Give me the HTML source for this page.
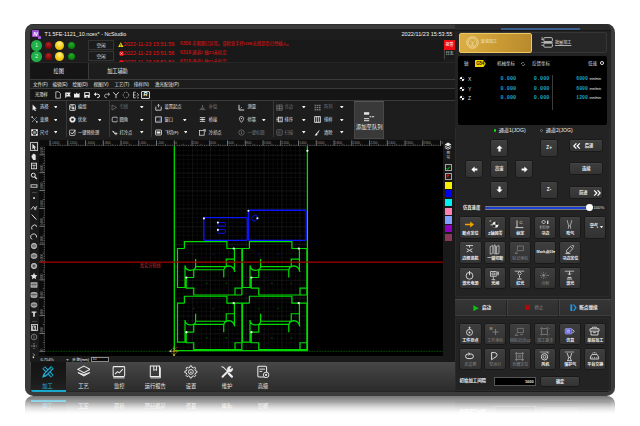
<!DOCTYPE html>
<html lang="zh-CN"><head><meta charset="utf-8"><title>NcStudio</title>
<style>
*{margin:0;padding:0;box-sizing:border-box}
html,body{width:640px;height:426px;background:#fff;overflow:hidden}
body{position:relative;font-family:"Liberation Sans","Noto Sans CJK SC",sans-serif;color:#eee;font-size:5.5px;line-height:1}
.a{position:absolute}
.t{position:absolute;white-space:nowrap;line-height:1}
#win{position:absolute;left:25px;top:23.8px;width:590.4px;height:372px;border-radius:8.5px;background:#3b3b3b;box-shadow:inset 0 .6px 0 #262626}
#inner{position:absolute;left:29.700px;top:28.700px;width:581.100px;height:363px;border-radius:4.500px;background:#1d1d1d}
</style></head><body>
<div class="a" style="left:0;top:395.900px;width:640px;height:24px;overflow:hidden">
<div class="a" style="left:0;top:0;width:640px;height:40px;transform:scaleY(-1)">
<div class="a" style="left:25px;top:-20px;width:590.200px;height:60px;border-radius:8px;background:#3b3b3b"></div>
<div class="a" style="left:30px;top:6.4px;width:425px;height:28.800px;background:linear-gradient(#474747,#3a3a3a 45%,#2c2c2c)"></div>
<div class="a" style="left:455px;top:0;width:155.600px;height:35.4px;background:#232323;border-radius:0 0 3px 0"></div>
<div class="a" style="left:30.600px;top:6.4px;width:35.400px;height:29.400px;background:linear-gradient(#141414,#1a1a1a 60%,#242424)"></div>
<div class="a" style="left:31px;top:34.2px;width:34.800px;height:1.700px;background:#18a8cc"></div>
<div class="t" style="left:27.60px;width:40px;text-align:center;top:27.7px;font-size:5.250px;color:#1cb4dc">加工</div>
<div class="t" style="left:63.40px;width:40px;text-align:center;top:27.7px;font-size:5.250px;color:#ececec">工艺</div>
<div class="t" style="left:99.30px;width:40px;text-align:center;top:27.7px;font-size:5.250px;color:#ececec">监控</div>
<div class="t" style="left:135.20px;width:40px;text-align:center;top:27.7px;font-size:5.250px;color:#ececec">运行报告</div>
<div class="t" style="left:171.10px;width:40px;text-align:center;top:27.7px;font-size:5.250px;color:#ececec">设置</div>
<div class="t" style="left:207.00px;width:40px;text-align:center;top:27.7px;font-size:5.250px;color:#ececec">维护</div>
<div class="t" style="left:242.90px;width:40px;text-align:center;top:27.7px;font-size:5.250px;color:#ececec">高级</div>
<div class="t" style="left:459.600px;top:23.4px;font-size:4.400px;font-weight:bold;color:#eee">初始加工间隔</div>
<div class="a" style="left:494.400px;top:21.4px;width:41.600px;height:8.800px;background:#000;border:.6px solid #555"></div>
<div class="a" style="left:541.400px;top:21.2px;width:37.400px;height:9px;background:#3a3a3a;border:.7px solid #161616"></div>
</div>
<div class="a" style="left:0;top:0;width:640px;height:24px;background:linear-gradient(rgba(255,255,255,.30),rgba(255,255,255,.46) 4px,rgba(255,255,255,.68) 8px,rgba(255,255,255,.86) 12px,rgba(255,255,255,.97) 16px,#fff 18px)"></div>
</div>
<div id="win"></div><div id="inner"></div>
<style>
.led{position:absolute;border-radius:50%}
.btn0{position:absolute;background:#1b1b1b;border:0.6px solid #343434;text-align:center;color:#ddd;font-size:4.6px}
.mn{position:absolute;top:82.700px;font-size:4.5px;color:#e8e8e8;white-space:nowrap}
.rb{position:absolute;font-size:4.25px;color:#e6e6e6;white-space:nowrap}
.rb.dim{color:#777}
.arr{position:absolute;width:0;height:0;border-left:1.750px solid transparent;border-right:1.750px solid transparent;border-top:2.500px solid #f2f2f2}
.vs{position:absolute;width:0.7px;background:#383838;top:101px;height:36px}
.ic{position:absolute;width:7px;height:7px}
</style>
<!-- title bar -->
<div class="a" style="left:31.7px;top:29.8px;width:7.6px;height:7.6px;background:#9b4fd0;border-radius:1px"></div>
<div class="a" style="left:37.5px;top:35.6px;width:3.4px;height:3.4px;background:#a457d6;border-radius:.6px"></div>
<div class="t" style="left:33.2px;top:30.6px;font-size:6px;font-weight:bold;font-style:italic;color:#fff">N</div>
<div class="t" style="left:44.6px;top:31.6px;font-size:5.4px;color:#f2f2f2">T1.5FE-1121_10.ncex* - NcStudio</div>
<div class="t" style="left:401.5px;top:31.6px;font-size:5.6px;color:#f2f2f2">2022/11/23 15:53:55</div>
<!-- leds -->
<div class="led" style="left:31.2px;top:40.2px;width:10.6px;height:10.6px;background:#1fb04a"></div>
<div class="led" style="left:31.2px;top:51.1px;width:10.6px;height:10.6px;background:#1fb04a"></div>
<div class="t" style="left:35px;top:42.6px;font-size:5.6px;color:#d8f5dc">1</div>
<div class="t" style="left:35px;top:53.5px;font-size:5.6px;color:#d8f5dc">2</div>
<div class="led" style="left:44.6px;top:42px;width:7px;height:7px;background:radial-gradient(circle at 50% 30%,#b42424,#8c0a0a 55%,#6a0404)"></div>
<div class="led" style="left:44.6px;top:52.9px;width:7px;height:7px;background:radial-gradient(circle at 50% 30%,#b42424,#8c0a0a 55%,#6a0404)"></div>
<div class="led" style="left:55.1px;top:41px;width:9px;height:9px;background:radial-gradient(circle at 50% 30%,#fff0a0,#f6d21c 45%,#e0a800)"></div>
<div class="led" style="left:55.1px;top:51.9px;width:9px;height:9px;background:radial-gradient(circle at 50% 30%,#fff0a0,#f6d21c 45%,#e0a800)"></div>
<div class="led" style="left:67.6px;top:42px;width:7px;height:7px;background:radial-gradient(circle at 50% 30%,#2aa82a,#0c8a14 55%,#066408)"></div>
<div class="led" style="left:67.6px;top:52.9px;width:7px;height:7px;background:radial-gradient(circle at 50% 30%,#2aa82a,#0c8a14 55%,#066408)"></div>
<div class="btn0" style="left:88.2px;top:40.400px;width:25.600px;height:9.800px;line-height:9.200px">空闲</div>
<div class="btn0" style="left:88.2px;top:51.400px;width:25.600px;height:9.800px;line-height:9.800px">空闲</div>
<!-- log -->
<div class="a" style="left:115px;top:40px;width:328px;height:21.9px;background:#191919;overflow:hidden">
 <svg class="a" style="left:3.2px;top:1.600px" width="5.600" height="5.400" viewBox="0 0 10 9"><path d="M5 0L10 9H0Z" fill="#f5e000"/><rect x="4.4" y="3" width="1.2" height="3.4" fill="#222"/><rect x="4.4" y="7" width="1.2" height="1.1" fill="#222"/></svg>
 <div class="led" style="left:3.6px;top:11px;width:5px;height:5px;background:#ee1010"></div><svg class="a" style="left:3.6px;top:11px" width="5" height="5" viewBox="0 0 5 5"><path d="M1.5 1.5l2 2M3.500 1.500l-2 2" stroke="#fff" stroke-width=".7"/></svg>
 <div class="led" style="left:3.6px;top:20.200px;width:5px;height:5px;background:#ee1010"></div>
 <div class="t" style="left:8.6px;top:1.75px;font-size:5.5px;color:#ee1111">2022-11-23 15:51:59</div>
 <div class="t" style="left:8.6px;top:10.75px;font-size:5.5px;color:#ee1111">2022-11-23 15:51:56</div>
 <div class="t" style="left:8.6px;top:19.9px;font-size:5.5px;color:#ee1111">2022-11-23 15:51:54</div>
 <div class="t" style="left:65px;top:2.2px;font-size:4.3px;color:#ee1111"><span style="font-size:4.900px">6306</span> 非限期已异常。请检查手持USB无线是否已经插入。</div>
 <div class="t" style="left:65px;top:11.2px;font-size:4.3px;color:#ee1111"><span style="font-size:4.900px">6319</span> 通道2 轴Z2未标定</div>
 <div class="t" style="left:65px;top:20.4px;font-size:4.3px;color:#ee1111"><span style="font-size:4.900px">6319</span> 通道1 轴Z1未标定</div>
</div>
<div class="a" style="left:443.6px;top:40px;width:11px;height:9.6px;background:#ee0d14"></div>
<div class="t" style="left:445.4px;top:42.8px;font-size:4px;color:#fff">报警</div>
<div class="a" style="left:443.6px;top:50px;width:11px;height:9px;background:#1a1a1a;border-left:.6px solid #444"></div>
<div class="t" style="left:445.4px;top:52.4px;font-size:4px;color:#ddd">日志</div>
<!-- tabs -->
<div class="a" style="left:30px;top:62.4px;width:425px;height:.6px;background:#262626"></div>
<div class="a" style="left:30px;top:63.2px;width:58px;height:15.6px;background:#151515"></div>
<div class="a" style="left:88px;top:63.2px;width:.7px;height:15.6px;background:#3a3a3a"></div>
<div class="t" style="left:53.600px;top:68.800px;font-size:5.150px;color:#f0f0f0">绘图</div>
<div class="t" style="left:107.200px;top:68.800px;font-size:5.150px;color:#f0f0f0">加工辅助</div>
<div class="a" style="left:30px;top:79px;width:425px;height:1px;background:#3a3a3a"></div>
<!-- menu -->
<div class="mn" style="left:33px">文件(F)</div><div class="mn" style="left:52.6px">编辑(E)</div><div class="mn" style="left:72.6px">绘图(D)</div><div class="mn" style="left:93.6px">视图(V)</div><div class="mn" style="left:114.4px">工艺(T)</div><div class="mn" style="left:133.8px">排样(N)</div><div class="mn" style="left:155px">激光配效(P)</div>
<div class="a" style="left:30px;top:88px;width:425px;height:.8px;background:#3a3a3a"></div>
<!-- toolbar -->
<div class="a" style="left:30px;top:88.800px;width:425px;height:11.600px;background:#151515"></div>
<div class="t" style="left:35px;top:92.8px;font-size:4.3px;color:#eee">光滑样</div>
<svg class="a" style="left:54.3px;top:91.0px" width="8" height="8" viewBox="0 0 8 8"><path d="M1.8 .8h3l1.6 1.6v4.8H1.8z" fill="none" stroke="#eee" stroke-width=".7"/></svg><svg class="a" style="left:63.6px;top:91.0px" width="8" height="8" viewBox="0 0 8 8"><path d="M1.2 1.5h5.6l-1.2 2 1.2 2H2.2v1.3H1.2z" fill="#eee"/><path d="M2.6 2.4l1.6 1.1-1.6 1.1z" fill="#222"/></svg><svg class="a" style="left:73.4px;top:91.0px" width="8" height="8" viewBox="0 0 8 8"><path d="M1 2.2l1.4 1 1.4-1.6 1.2 1.6 1.6-1.4v4.6H1z" fill="#eee"/></svg><svg class="a" style="left:83.2px;top:91.0px" width="8" height="8" viewBox="0 0 8 8"><path d="M1.2 1.2h5.6v5.6H1.2z" fill="#eee"/><rect x="2.2" y="2" width="3.6" height="2" fill="#222"/><rect x="3.4" y="5.2" width="1.4" height="1.6" fill="#222"/></svg><svg class="a" style="left:93.4px;top:91.0px" width="8" height="8" viewBox="0 0 8 8"><path d="M2 3.2h2.8a1.7 1.7 0 0 1 0 3.4H4" fill="none" stroke="#eee" stroke-width="1"/><path d="M3 1.2L.8 3.2 3 5.2z" fill="#eee"/></svg><svg class="a" style="left:102.6px;top:91.0px" width="8" height="8" viewBox="0 0 8 8"><path d="M6 3.2H3.2a1.7 1.7 0 0 0 0 3.4H4" fill="none" stroke="#999" stroke-width="1"/><path d="M5 1.2l2.2 2L5 5.2z" fill="#999"/></svg><svg class="a" style="left:112.4px;top:91.0px" width="8" height="8" viewBox="0 0 8 8"><path d="M1.2 1.2L4 4.2 6.8 1.2M4 4.2v3" fill="none" stroke="#ddd" stroke-width=".9"/></svg><svg class="a" style="left:122.0px;top:91.0px" width="8" height="8" viewBox="0 0 8 8"><circle cx="4" cy="4" r="2.8" fill="none" stroke="#aaa" stroke-width=".8" stroke-dasharray="1.6 1"/></svg><svg class="a" style="left:131.6px;top:91.0px" width="8" height="8" viewBox="0 0 8 8"><path d="M1.5 1.2v5.6M1.5 1.2h2.2M1.5 4h2M1.5 6.8h2.2M5 2l1.6 1.8L5 5.6M5.2 6.8h1.6" fill="none" stroke="#ddd" stroke-width=".8"/></svg><div class="a" style="left:141.4px;top:90.6px;width:8.4px;height:8.8px;border:.7px solid #cfcfcf;border-radius:1px;background:#222"></div><div class="t" style="left:143.6px;top:92.2px;font-size:5.4px;font-weight:bold;font-style:italic;color:#fff">R</div>
<div class="a" style="left:30px;top:100.4px;width:425px;height:.8px;background:#3a3a3a"></div>
<!-- ribbon -->
<svg class="a" style="left:30.7px;top:103.5px" width="7" height="7" viewBox="0 0 7 7"><path d="M1.6 .6l4.2 4.2H4l1 2-1 .5-1-2L1.6 6.6z" fill="#eaeaea"/></svg><div class="rb" style="left:40px;top:105.20px">选择</div><svg class="a" style="left:53.90px;top:105.70px" width="3.6" height="2.6" viewBox="0 0 3.6 2.6"><path d="M0 0h3.600L1.800 2.600z" fill="#f4f4f4"/></svg><svg class="a" style="left:30.7px;top:116.3px" width="7" height="7" viewBox="0 0 7 7"><path d="M1 1l5 5M1 6L6 1" stroke="#eaeaea" stroke-width=".7" stroke-dasharray="1.2 .6"/><rect x=".4" y=".4" width="1.4" height="1.4" fill="#eaeaea"/><rect x="5.2" y="5.2" width="1.4" height="1.4" fill="#eaeaea"/></svg><div class="rb" style="left:40px;top:118.00px">变换</div><svg class="a" style="left:53.90px;top:118.50px" width="3.6" height="2.6" viewBox="0 0 3.6 2.6"><path d="M0 0h3.600L1.800 2.600z" fill="#f4f4f4"/></svg><svg class="a" style="left:30.7px;top:129.1px" width="7" height="7" viewBox="0 0 7 7"><rect x=".8" y=".8" width="5.4" height="5.4" fill="none" stroke="#eaeaea" stroke-width=".8"/><path d="M2.2 2.2h2.6v2.6H2.2z" fill="#eaeaea" opacity=".6"/><path d="M.4.4h1.6v1.6H.4zM5 .4h1.6v1.6H5zM.4 5h1.6v1.6H.4zM5 5h1.6v1.6H5z" fill="#eaeaea"/></svg><div class="rb" style="left:40px;top:130.80px">尺寸</div><svg class="a" style="left:53.90px;top:131.30px" width="3.6" height="2.6" viewBox="0 0 3.6 2.6"><path d="M0 0h3.600L1.800 2.600z" fill="#f4f4f4"/></svg><svg class="a" style="left:68.9px;top:103.5px" width="7" height="7" viewBox="0 0 7 7"><rect x=".6" y=".6" width="5.8" height="5.8" rx=".8" fill="none" stroke="#eaeaea" stroke-width=".8"/><rect x="1.8" y="1.8" width="2.2" height="2.2" fill="none" stroke="#eaeaea" stroke-width=".7"/><rect x="3.4" y="3.4" width="2" height="2" fill="#eaeaea"/></svg><div class="rb" style="left:78px;top:105.20px">编组</div><svg class="a" style="left:68.9px;top:116.3px" width="7" height="7" viewBox="0 0 7 7"><circle cx="3.5" cy="3.5" r="2.1" fill="none" stroke="#eaeaea" stroke-width="1.5"/><circle cx="3.5" cy="3.5" r="2.9" fill="none" stroke="#eaeaea" stroke-width=".9" stroke-dasharray="1 1.28"/></svg><div class="rb" style="left:78px;top:118.00px">优化</div><svg class="a" style="left:97.60px;top:118.50px" width="3.6" height="2.6" viewBox="0 0 3.6 2.6"><path d="M0 0h3.600L1.800 2.600z" fill="#f4f4f4"/></svg><svg class="a" style="left:68.9px;top:129.1px" width="7" height="7" viewBox="0 0 7 7"><rect x=".6" y="1" width="5.4" height="5.4" rx=".6" fill="none" stroke="#eaeaea" stroke-width=".7"/><path d="M1.8 3.4l1.4 1.6L6.6.8" fill="none" stroke="#eaeaea" stroke-width=".9"/></svg><div class="rb" style="left:78px;top:130.80px">一键预处理</div><svg class="a" style="left:110.5px;top:103.5px" width="7" height="7" viewBox="0 0 7 7"><path d="M1 1l4.6 2.5L1 6z" fill="none" stroke="#777" stroke-width=".7"/></svg><div class="rb dim" style="left:119.6px;top:105.20px">引线</div><svg class="a" style="left:140.20px;top:105.70px" width="3.6" height="2.6" viewBox="0 0 3.6 2.6"><path d="M0 0h3.600L1.800 2.600z" fill="#f4f4f4"/></svg><svg class="a" style="left:110.5px;top:116.3px" width="7" height="7" viewBox="0 0 7 7"><path d="M6 1.2H2.2a1 1 0 0 0-1 1v2.6a1 1 0 0 0 1 1H6" fill="none" stroke="#eaeaea" stroke-width=".7"/><path d="M6.2 1v5" stroke="#eaeaea" stroke-width=".6" stroke-dasharray=".8 .6"/></svg><div class="rb" style="left:119.6px;top:118.00px">圆角</div><svg class="a" style="left:140.20px;top:118.50px" width="3.6" height="2.6" viewBox="0 0 3.6 2.6"><path d="M0 0h3.600L1.800 2.600z" fill="#f4f4f4"/></svg><svg class="a" style="left:110.5px;top:129.1px" width="7" height="7" viewBox="0 0 7 7"><path d="M.6 1.4l2.6 1.2 1 2.6-1.4-1.2z" fill="#eaeaea"/><path d="M3.4 4.6h3M5 3.2v3" stroke="#eaeaea" stroke-width=".8"/></svg><div class="rb" style="left:119.6px;top:130.80px">打冷点</div><svg class="a" style="left:140.20px;top:131.30px" width="3.6" height="2.6" viewBox="0 0 3.6 2.6"><path d="M0 0h3.600L1.800 2.600z" fill="#f4f4f4"/></svg><svg class="a" style="left:154.9px;top:103.5px" width="7" height="7" viewBox="0 0 7 7"><path d="M.8 2.6v3.6h5.4V2.6" fill="none" stroke="#eaeaea" stroke-width=".8"/><path d="M3.5.4v3M2.3 1.6L3.5.4l1.2 1.2" fill="none" stroke="#eaeaea" stroke-width=".7"/></svg><div class="rb" style="left:164.6px;top:105.20px">设置起点</div><svg class="a" style="left:154.9px;top:116.3px" width="7" height="7" viewBox="0 0 7 7"><rect x=".7" y=".9" width="5.6" height="5.2" fill="none" stroke="#eaeaea" stroke-width=".8"/><path d="M5.2 2v3.2H2" fill="none" stroke="#6a7fb5" stroke-width=".7"/></svg><div class="rb" style="left:164.6px;top:118.00px">窗口</div><svg class="a" style="left:183.20px;top:118.50px" width="3.6" height="2.6" viewBox="0 0 3.6 2.6"><path d="M0 0h3.600L1.800 2.600z" fill="#f4f4f4"/></svg><svg class="a" style="left:154.9px;top:129.1px" width="7" height="7" viewBox="0 0 7 7"><rect x=".5" y="1" width="6" height="5" rx=".6" fill="none" stroke="#eaeaea" stroke-width=".8"/><rect x="1.6" y="2.4" width="3.8" height="2.2" fill="#eaeaea"/></svg><div class="rb" style="left:164.6px;top:130.80px">飞切(F)</div><svg class="a" style="left:183.60px;top:131.30px" width="3.6" height="2.6" viewBox="0 0 3.6 2.6"><path d="M0 0h3.600L1.800 2.600z" fill="#f4f4f4"/></svg><svg class="a" style="left:199.1px;top:103.5px" width="7" height="7" viewBox="0 0 7 7"><path d="M.6 5.6h5.8M1.6 4.4h3.8M2.6 3.2h1.8M3.5 1v2" stroke="#777" stroke-width=".7" fill="none"/></svg><div class="rb dim" style="left:208.8px;top:105.20px">补偿</div><svg class="a" style="left:199.1px;top:116.3px" width="7" height="7" viewBox="0 0 7 7"><path d="M.8 1.6h5.4M.8 3.5h5.4M.8 5.4h5.4" stroke="#eaeaea" stroke-width=".8"/><rect x="2.6" y="2.6" width="1.8" height="1.8" fill="#eaeaea"/></svg><div class="rb" style="left:208.8px;top:118.00px">桥接</div><svg class="a" style="left:199.1px;top:129.1px" width="7" height="7" viewBox="0 0 7 7"><rect x=".6" y="1.6" width="4.6" height="4.6" fill="none" stroke="#eaeaea" stroke-width=".7"/><path d="M4.4.6h2v2" fill="none" stroke="#eaeaea" stroke-width=".7"/></svg><div class="rb" style="left:208.8px;top:130.80px">冷却点</div><svg class="a" style="left:237.9px;top:103.5px" width="7" height="7" viewBox="0 0 7 7"><path d="M1 .8v5.2h5.2" fill="none" stroke="#eaeaea" stroke-width=".9"/><path d="M2.4 4.6L4 3" stroke="#eaeaea" stroke-width=".5"/></svg><div class="rb" style="left:247.6px;top:105.20px">测量</div><svg class="a" style="left:237.9px;top:116.3px" width="7" height="7" viewBox="0 0 7 7"><path d="M3.5 6.4C1.8 4.4 1.4 3.4 1.4 2.6a2.1 2.1 0 0 1 4.2 0c0 .8-.4 1.8-2.1 3.8z" fill="none" stroke="#eaeaea" stroke-width=".7"/><circle cx="3.5" cy="2.6" r=".7" fill="#eaeaea"/></svg><div class="rb" style="left:247.6px;top:118.00px">停靠</div><svg class="a" style="left:262.00px;top:118.50px" width="3.6" height="2.6" viewBox="0 0 3.6 2.6"><path d="M0 0h3.600L1.800 2.600z" fill="#f4f4f4"/></svg><svg class="a" style="left:237.9px;top:129.1px" width="7" height="7" viewBox="0 0 7 7"><circle cx="3.5" cy="3.5" r="2.7" fill="none" stroke="#777" stroke-width=".7"/><path d="M3.5 2v3" stroke="#777" stroke-width=".7"/></svg><div class="rb dim" style="left:247.6px;top:130.80px">一键标圆</div><svg class="a" style="left:275.7px;top:103.5px" width="7" height="7" viewBox="0 0 7 7"><path d="M.6 1h5.8M.6 2.8h5.8M.6 4.6h5.8M.6 6.2h5.8M.8 1v5.2M3.5 1v5.2M6.2 1v5.2" stroke="#777" stroke-width=".7"/></svg><div class="rb dim" style="left:284.6px;top:105.20px">共边</div><svg class="a" style="left:302.00px;top:105.70px" width="3.6" height="2.6" viewBox="0 0 3.6 2.6"><path d="M0 0h3.600L1.800 2.600z" fill="#f4f4f4"/></svg><svg class="a" style="left:275.7px;top:116.3px" width="7" height="7" viewBox="0 0 7 7"><rect x="2.4" y="1.2" width="3.8" height="4.6" fill="none" stroke="#eaeaea" stroke-width=".8"/><path d="M.4 2h1.6M.4 3.5h1.6M.4 5h1.6" stroke="#eaeaea" stroke-width=".7"/><path d="M3.4 2.6h1.8M3.4 4.2h1.8" stroke="#eaeaea" stroke-width=".6"/></svg><div class="rb" style="left:284.6px;top:118.00px">排序</div><svg class="a" style="left:302.00px;top:118.50px" width="3.6" height="2.6" viewBox="0 0 3.6 2.6"><path d="M0 0h3.600L1.800 2.600z" fill="#f4f4f4"/></svg><svg class="a" style="left:275.7px;top:129.1px" width="7" height="7" viewBox="0 0 7 7"><rect x=".8" y=".8" width="5.4" height="5.4" rx=".6" fill="none" stroke="#777" stroke-width=".7"/><path d="M2 2.2h3M2 3.5h3M2 4.8h3" stroke="#777" stroke-width=".6" stroke-dasharray=".8 .5"/></svg><div class="rb dim" style="left:284.6px;top:130.80px">扫描</div><svg class="a" style="left:302.00px;top:131.30px" width="3.6" height="2.6" viewBox="0 0 3.6 2.6"><path d="M0 0h3.600L1.800 2.600z" fill="#f4f4f4"/></svg><svg class="a" style="left:314.3px;top:103.5px" width="7" height="7" viewBox="0 0 7 7"><path d="M.6.8h1.6v1.4H.6zM2.8.8h1.6v1.4H2.8zM5 .8h1.6v1.4H5zM.6 2.9h1.6v1.4H.6zM2.8 2.9h1.6v1.4H2.8zM5 2.9h1.6v1.4H5zM.6 5h1.6v1.4H.6zM2.8 5h1.6v1.4H2.8zM5 5h1.6v1.4H5z" fill="#777"/></svg><div class="rb dim" style="left:324px;top:105.20px">阵列</div><svg class="a" style="left:340.00px;top:105.70px" width="3.6" height="2.6" viewBox="0 0 3.6 2.6"><path d="M0 0h3.600L1.800 2.600z" fill="#f4f4f4"/></svg><svg class="a" style="left:314.3px;top:116.3px" width="7" height="7" viewBox="0 0 7 7"><rect x=".7" y=".7" width="5.6" height="5.6" fill="none" stroke="#eaeaea" stroke-width=".9"/><path d="M2.6.8v5.4M4.4.8v5.4" stroke="#eaeaea" stroke-width=".7"/></svg><div class="rb" style="left:324px;top:118.00px">排样</div><svg class="a" style="left:340.00px;top:118.50px" width="3.6" height="2.6" viewBox="0 0 3.6 2.6"><path d="M0 0h3.600L1.800 2.600z" fill="#f4f4f4"/></svg><svg class="a" style="left:314.3px;top:129.1px" width="7" height="7" viewBox="0 0 7 7"><path d="M5.8.6L3 3.6l1 1zM2.6 3.8l1.2 1.2-1 1.6H.6z" fill="#eaeaea"/></svg><div class="rb" style="left:324px;top:130.80px">清除</div><svg class="a" style="left:340.00px;top:131.30px" width="3.6" height="2.6" viewBox="0 0 3.6 2.6"><path d="M0 0h3.600L1.800 2.600z" fill="#f4f4f4"/></svg><div class="vs" style="left:66.2px"></div><div class="vs" style="left:108.8px"></div><div class="vs" style="left:151.2px"></div><div class="vs" style="left:273px"></div>
<div class="a" style="left:354.100px;top:101.200px;width:30.200px;height:37.400px;background:#393939;border:.6px solid #474747;border-top-color:#555"></div>
<div class="t" style="left:356px;top:124.900px;font-size:5.300px;color:#f0f0f0">添加至队列</div>
<svg class="a" style="left:364.200px;top:111.600px" width="11" height="10" viewBox="0 0 11 10"><rect x="0" y=".2" width="5.200" height="2.500" fill="#e4e4e4"/><path d="M0 6.700h5.200M0 8.700h5.200" stroke="#e4e4e4" stroke-width="1"/><path d="M5.600 4.700h1.400M7.600 4.700h2.600" stroke="#e4e4e4" stroke-width="1.100"/></svg>

<div class="a" style="left:30px;top:138.6px;width:425px;height:224px;background:#1b1b1b"></div>
<div class="a" style="left:45px;top:146px;width:398.4px;height:210.4px;background:#000"></div>
<div class="a" style="left:39px;top:140px;width:404.4px;height:6.2px;background:#0c0c0c"></div>
<div class="a" style="left:39px;top:140px;width:6.2px;height:216.4px;background:#0c0c0c"></div>
<svg class="a" style="left:30px;top:138px" width="426" height="226" viewBox="30 138 426 226"><path d="M50.05 140.4V146" stroke="#bdbdbd" stroke-width=".6"/><text x="50.85" y="144.2" font-size="3.300" fill="#8e8e8e" font-family="Liberation Sans,sans-serif">-1400</text><path d="M51.83 144.8V146" stroke="#aaa" stroke-width=".45"/><path d="M53.60 144.8V146" stroke="#aaa" stroke-width=".45"/><path d="M55.38 144.8V146" stroke="#aaa" stroke-width=".45"/><path d="M57.15 144.8V146" stroke="#aaa" stroke-width=".45"/><path d="M58.93 143.8V146" stroke="#aaa" stroke-width=".45"/><path d="M60.70 144.8V146" stroke="#aaa" stroke-width=".45"/><path d="M62.48 144.8V146" stroke="#aaa" stroke-width=".45"/><path d="M64.25 144.8V146" stroke="#aaa" stroke-width=".45"/><path d="M66.03 144.8V146" stroke="#aaa" stroke-width=".45"/><path d="M67.80 140.4V146" stroke="#bdbdbd" stroke-width=".6"/><text x="68.60" y="144.2" font-size="3.300" fill="#8e8e8e" font-family="Liberation Sans,sans-serif">-1200</text><path d="M69.58 144.8V146" stroke="#aaa" stroke-width=".45"/><path d="M71.35 144.8V146" stroke="#aaa" stroke-width=".45"/><path d="M73.13 144.8V146" stroke="#aaa" stroke-width=".45"/><path d="M74.90 144.8V146" stroke="#aaa" stroke-width=".45"/><path d="M76.68 143.8V146" stroke="#aaa" stroke-width=".45"/><path d="M78.45 144.8V146" stroke="#aaa" stroke-width=".45"/><path d="M80.23 144.8V146" stroke="#aaa" stroke-width=".45"/><path d="M82.00 144.8V146" stroke="#aaa" stroke-width=".45"/><path d="M83.78 144.8V146" stroke="#aaa" stroke-width=".45"/><path d="M85.55 140.4V146" stroke="#bdbdbd" stroke-width=".6"/><text x="86.35" y="144.2" font-size="3.300" fill="#8e8e8e" font-family="Liberation Sans,sans-serif">-1000</text><path d="M87.33 144.8V146" stroke="#aaa" stroke-width=".45"/><path d="M89.10 144.8V146" stroke="#aaa" stroke-width=".45"/><path d="M90.88 144.8V146" stroke="#aaa" stroke-width=".45"/><path d="M92.65 144.8V146" stroke="#aaa" stroke-width=".45"/><path d="M94.43 143.8V146" stroke="#aaa" stroke-width=".45"/><path d="M96.20 144.8V146" stroke="#aaa" stroke-width=".45"/><path d="M97.98 144.8V146" stroke="#aaa" stroke-width=".45"/><path d="M99.75 144.8V146" stroke="#aaa" stroke-width=".45"/><path d="M101.53 144.8V146" stroke="#aaa" stroke-width=".45"/><path d="M103.30 140.4V146" stroke="#bdbdbd" stroke-width=".6"/><text x="104.10" y="144.2" font-size="3.300" fill="#8e8e8e" font-family="Liberation Sans,sans-serif">-800</text><path d="M105.08 144.8V146" stroke="#aaa" stroke-width=".45"/><path d="M106.85 144.8V146" stroke="#aaa" stroke-width=".45"/><path d="M108.63 144.8V146" stroke="#aaa" stroke-width=".45"/><path d="M110.40 144.8V146" stroke="#aaa" stroke-width=".45"/><path d="M112.18 143.8V146" stroke="#aaa" stroke-width=".45"/><path d="M113.95 144.8V146" stroke="#aaa" stroke-width=".45"/><path d="M115.73 144.8V146" stroke="#aaa" stroke-width=".45"/><path d="M117.50 144.8V146" stroke="#aaa" stroke-width=".45"/><path d="M119.28 144.8V146" stroke="#aaa" stroke-width=".45"/><path d="M121.05 140.4V146" stroke="#bdbdbd" stroke-width=".6"/><text x="121.85" y="144.2" font-size="3.300" fill="#8e8e8e" font-family="Liberation Sans,sans-serif">-600</text><path d="M122.83 144.8V146" stroke="#aaa" stroke-width=".45"/><path d="M124.60 144.8V146" stroke="#aaa" stroke-width=".45"/><path d="M126.38 144.8V146" stroke="#aaa" stroke-width=".45"/><path d="M128.15 144.8V146" stroke="#aaa" stroke-width=".45"/><path d="M129.93 143.8V146" stroke="#aaa" stroke-width=".45"/><path d="M131.70 144.8V146" stroke="#aaa" stroke-width=".45"/><path d="M133.48 144.8V146" stroke="#aaa" stroke-width=".45"/><path d="M135.25 144.8V146" stroke="#aaa" stroke-width=".45"/><path d="M137.03 144.8V146" stroke="#aaa" stroke-width=".45"/><path d="M138.80 140.4V146" stroke="#bdbdbd" stroke-width=".6"/><text x="139.60" y="144.2" font-size="3.300" fill="#8e8e8e" font-family="Liberation Sans,sans-serif">-400</text><path d="M140.58 144.8V146" stroke="#aaa" stroke-width=".45"/><path d="M142.35 144.8V146" stroke="#aaa" stroke-width=".45"/><path d="M144.12 144.8V146" stroke="#aaa" stroke-width=".45"/><path d="M145.90 144.8V146" stroke="#aaa" stroke-width=".45"/><path d="M147.68 143.8V146" stroke="#aaa" stroke-width=".45"/><path d="M149.45 144.8V146" stroke="#aaa" stroke-width=".45"/><path d="M151.23 144.8V146" stroke="#aaa" stroke-width=".45"/><path d="M153.00 144.8V146" stroke="#aaa" stroke-width=".45"/><path d="M154.78 144.8V146" stroke="#aaa" stroke-width=".45"/><path d="M156.55 140.4V146" stroke="#bdbdbd" stroke-width=".6"/><text x="157.35" y="144.2" font-size="3.300" fill="#8e8e8e" font-family="Liberation Sans,sans-serif">-200</text><path d="M158.33 144.8V146" stroke="#aaa" stroke-width=".45"/><path d="M160.10 144.8V146" stroke="#aaa" stroke-width=".45"/><path d="M161.88 144.8V146" stroke="#aaa" stroke-width=".45"/><path d="M163.65 144.8V146" stroke="#aaa" stroke-width=".45"/><path d="M165.43 143.8V146" stroke="#aaa" stroke-width=".45"/><path d="M167.20 144.8V146" stroke="#aaa" stroke-width=".45"/><path d="M168.98 144.8V146" stroke="#aaa" stroke-width=".45"/><path d="M170.75 144.8V146" stroke="#aaa" stroke-width=".45"/><path d="M172.53 144.8V146" stroke="#aaa" stroke-width=".45"/><path d="M174.30 140.4V146" stroke="#bdbdbd" stroke-width=".6"/><text x="175.10" y="144.2" font-size="3.300" fill="#8e8e8e" font-family="Liberation Sans,sans-serif">0</text><path d="M176.08 144.8V146" stroke="#aaa" stroke-width=".45"/><path d="M177.85 144.8V146" stroke="#aaa" stroke-width=".45"/><path d="M179.62 144.8V146" stroke="#aaa" stroke-width=".45"/><path d="M181.40 144.8V146" stroke="#aaa" stroke-width=".45"/><path d="M183.18 143.8V146" stroke="#aaa" stroke-width=".45"/><path d="M184.95 144.8V146" stroke="#aaa" stroke-width=".45"/><path d="M186.73 144.8V146" stroke="#aaa" stroke-width=".45"/><path d="M188.50 144.8V146" stroke="#aaa" stroke-width=".45"/><path d="M190.28 144.8V146" stroke="#aaa" stroke-width=".45"/><path d="M192.05 140.4V146" stroke="#bdbdbd" stroke-width=".6"/><text x="192.85" y="144.2" font-size="3.300" fill="#8e8e8e" font-family="Liberation Sans,sans-serif">200</text><path d="M193.83 144.8V146" stroke="#aaa" stroke-width=".45"/><path d="M195.60 144.8V146" stroke="#aaa" stroke-width=".45"/><path d="M197.38 144.8V146" stroke="#aaa" stroke-width=".45"/><path d="M199.15 144.8V146" stroke="#aaa" stroke-width=".45"/><path d="M200.93 143.8V146" stroke="#aaa" stroke-width=".45"/><path d="M202.70 144.8V146" stroke="#aaa" stroke-width=".45"/><path d="M204.48 144.8V146" stroke="#aaa" stroke-width=".45"/><path d="M206.25 144.8V146" stroke="#aaa" stroke-width=".45"/><path d="M208.03 144.8V146" stroke="#aaa" stroke-width=".45"/><path d="M209.80 140.4V146" stroke="#bdbdbd" stroke-width=".6"/><text x="210.60" y="144.2" font-size="3.300" fill="#8e8e8e" font-family="Liberation Sans,sans-serif">400</text><path d="M211.58 144.8V146" stroke="#aaa" stroke-width=".45"/><path d="M213.35 144.8V146" stroke="#aaa" stroke-width=".45"/><path d="M215.12 144.8V146" stroke="#aaa" stroke-width=".45"/><path d="M216.90 144.8V146" stroke="#aaa" stroke-width=".45"/><path d="M218.68 143.8V146" stroke="#aaa" stroke-width=".45"/><path d="M220.45 144.8V146" stroke="#aaa" stroke-width=".45"/><path d="M222.23 144.8V146" stroke="#aaa" stroke-width=".45"/><path d="M224.00 144.8V146" stroke="#aaa" stroke-width=".45"/><path d="M225.78 144.8V146" stroke="#aaa" stroke-width=".45"/><path d="M227.55 140.4V146" stroke="#bdbdbd" stroke-width=".6"/><text x="228.35" y="144.2" font-size="3.300" fill="#8e8e8e" font-family="Liberation Sans,sans-serif">600</text><path d="M229.33 144.8V146" stroke="#aaa" stroke-width=".45"/><path d="M231.10 144.8V146" stroke="#aaa" stroke-width=".45"/><path d="M232.88 144.8V146" stroke="#aaa" stroke-width=".45"/><path d="M234.65 144.8V146" stroke="#aaa" stroke-width=".45"/><path d="M236.43 143.8V146" stroke="#aaa" stroke-width=".45"/><path d="M238.20 144.8V146" stroke="#aaa" stroke-width=".45"/><path d="M239.98 144.8V146" stroke="#aaa" stroke-width=".45"/><path d="M241.75 144.8V146" stroke="#aaa" stroke-width=".45"/><path d="M243.53 144.8V146" stroke="#aaa" stroke-width=".45"/><path d="M245.30 140.4V146" stroke="#bdbdbd" stroke-width=".6"/><text x="246.10" y="144.2" font-size="3.300" fill="#8e8e8e" font-family="Liberation Sans,sans-serif">800</text><path d="M247.08 144.8V146" stroke="#aaa" stroke-width=".45"/><path d="M248.85 144.8V146" stroke="#aaa" stroke-width=".45"/><path d="M250.62 144.8V146" stroke="#aaa" stroke-width=".45"/><path d="M252.40 144.8V146" stroke="#aaa" stroke-width=".45"/><path d="M254.18 143.8V146" stroke="#aaa" stroke-width=".45"/><path d="M255.95 144.8V146" stroke="#aaa" stroke-width=".45"/><path d="M257.73 144.8V146" stroke="#aaa" stroke-width=".45"/><path d="M259.50 144.8V146" stroke="#aaa" stroke-width=".45"/><path d="M261.28 144.8V146" stroke="#aaa" stroke-width=".45"/><path d="M263.05 140.4V146" stroke="#bdbdbd" stroke-width=".6"/><text x="263.85" y="144.2" font-size="3.300" fill="#8e8e8e" font-family="Liberation Sans,sans-serif">1000</text><path d="M264.82 144.8V146" stroke="#aaa" stroke-width=".45"/><path d="M266.60 144.8V146" stroke="#aaa" stroke-width=".45"/><path d="M268.38 144.8V146" stroke="#aaa" stroke-width=".45"/><path d="M270.15 144.8V146" stroke="#aaa" stroke-width=".45"/><path d="M271.93 143.8V146" stroke="#aaa" stroke-width=".45"/><path d="M273.70 144.8V146" stroke="#aaa" stroke-width=".45"/><path d="M275.48 144.8V146" stroke="#aaa" stroke-width=".45"/><path d="M277.25 144.8V146" stroke="#aaa" stroke-width=".45"/><path d="M279.03 144.8V146" stroke="#aaa" stroke-width=".45"/><path d="M280.80 140.4V146" stroke="#bdbdbd" stroke-width=".6"/><text x="281.60" y="144.2" font-size="3.300" fill="#8e8e8e" font-family="Liberation Sans,sans-serif">1200</text><path d="M282.57 144.8V146" stroke="#aaa" stroke-width=".45"/><path d="M284.35 144.8V146" stroke="#aaa" stroke-width=".45"/><path d="M286.12 144.8V146" stroke="#aaa" stroke-width=".45"/><path d="M287.90 144.8V146" stroke="#aaa" stroke-width=".45"/><path d="M289.68 143.8V146" stroke="#aaa" stroke-width=".45"/><path d="M291.45 144.8V146" stroke="#aaa" stroke-width=".45"/><path d="M293.23 144.8V146" stroke="#aaa" stroke-width=".45"/><path d="M295.00 144.8V146" stroke="#aaa" stroke-width=".45"/><path d="M296.78 144.8V146" stroke="#aaa" stroke-width=".45"/><path d="M298.55 140.4V146" stroke="#bdbdbd" stroke-width=".6"/><text x="299.35" y="144.2" font-size="3.300" fill="#8e8e8e" font-family="Liberation Sans,sans-serif">1400</text><path d="M300.32 144.8V146" stroke="#aaa" stroke-width=".45"/><path d="M302.10 144.8V146" stroke="#aaa" stroke-width=".45"/><path d="M303.88 144.8V146" stroke="#aaa" stroke-width=".45"/><path d="M305.65 144.8V146" stroke="#aaa" stroke-width=".45"/><path d="M307.43 143.8V146" stroke="#aaa" stroke-width=".45"/><path d="M309.20 144.8V146" stroke="#aaa" stroke-width=".45"/><path d="M310.98 144.8V146" stroke="#aaa" stroke-width=".45"/><path d="M312.75 144.8V146" stroke="#aaa" stroke-width=".45"/><path d="M314.53 144.8V146" stroke="#aaa" stroke-width=".45"/><path d="M316.30 140.4V146" stroke="#bdbdbd" stroke-width=".6"/><text x="317.10" y="144.2" font-size="3.300" fill="#8e8e8e" font-family="Liberation Sans,sans-serif">1600</text><path d="M318.07 144.8V146" stroke="#aaa" stroke-width=".45"/><path d="M319.85 144.8V146" stroke="#aaa" stroke-width=".45"/><path d="M321.62 144.8V146" stroke="#aaa" stroke-width=".45"/><path d="M323.40 144.8V146" stroke="#aaa" stroke-width=".45"/><path d="M325.18 143.8V146" stroke="#aaa" stroke-width=".45"/><path d="M326.95 144.8V146" stroke="#aaa" stroke-width=".45"/><path d="M328.73 144.8V146" stroke="#aaa" stroke-width=".45"/><path d="M330.50 144.8V146" stroke="#aaa" stroke-width=".45"/><path d="M332.28 144.8V146" stroke="#aaa" stroke-width=".45"/><path d="M334.05 140.4V146" stroke="#bdbdbd" stroke-width=".6"/><text x="334.85" y="144.2" font-size="3.300" fill="#8e8e8e" font-family="Liberation Sans,sans-serif">1800</text><path d="M335.82 144.8V146" stroke="#aaa" stroke-width=".45"/><path d="M337.60 144.8V146" stroke="#aaa" stroke-width=".45"/><path d="M339.38 144.8V146" stroke="#aaa" stroke-width=".45"/><path d="M341.15 144.8V146" stroke="#aaa" stroke-width=".45"/><path d="M342.93 143.8V146" stroke="#aaa" stroke-width=".45"/><path d="M344.70 144.8V146" stroke="#aaa" stroke-width=".45"/><path d="M346.48 144.8V146" stroke="#aaa" stroke-width=".45"/><path d="M348.25 144.8V146" stroke="#aaa" stroke-width=".45"/><path d="M350.03 144.8V146" stroke="#aaa" stroke-width=".45"/><path d="M351.80 140.4V146" stroke="#bdbdbd" stroke-width=".6"/><text x="352.60" y="144.2" font-size="3.300" fill="#8e8e8e" font-family="Liberation Sans,sans-serif">2000</text><path d="M353.57 144.8V146" stroke="#aaa" stroke-width=".45"/><path d="M355.35 144.8V146" stroke="#aaa" stroke-width=".45"/><path d="M357.12 144.8V146" stroke="#aaa" stroke-width=".45"/><path d="M358.90 144.8V146" stroke="#aaa" stroke-width=".45"/><path d="M360.68 143.8V146" stroke="#aaa" stroke-width=".45"/><path d="M362.45 144.8V146" stroke="#aaa" stroke-width=".45"/><path d="M364.23 144.8V146" stroke="#aaa" stroke-width=".45"/><path d="M366.00 144.8V146" stroke="#aaa" stroke-width=".45"/><path d="M367.78 144.8V146" stroke="#aaa" stroke-width=".45"/><path d="M369.55 140.4V146" stroke="#bdbdbd" stroke-width=".6"/><text x="370.35" y="144.2" font-size="3.300" fill="#8e8e8e" font-family="Liberation Sans,sans-serif">2200</text><path d="M371.32 144.8V146" stroke="#aaa" stroke-width=".45"/><path d="M373.10 144.8V146" stroke="#aaa" stroke-width=".45"/><path d="M374.88 144.8V146" stroke="#aaa" stroke-width=".45"/><path d="M376.65 144.8V146" stroke="#aaa" stroke-width=".45"/><path d="M378.43 143.8V146" stroke="#aaa" stroke-width=".45"/><path d="M380.20 144.8V146" stroke="#aaa" stroke-width=".45"/><path d="M381.98 144.8V146" stroke="#aaa" stroke-width=".45"/><path d="M383.75 144.8V146" stroke="#aaa" stroke-width=".45"/><path d="M385.53 144.8V146" stroke="#aaa" stroke-width=".45"/><path d="M387.30 140.4V146" stroke="#bdbdbd" stroke-width=".6"/><text x="388.10" y="144.2" font-size="3.300" fill="#8e8e8e" font-family="Liberation Sans,sans-serif">2400</text><path d="M389.07 144.8V146" stroke="#aaa" stroke-width=".45"/><path d="M390.85 144.8V146" stroke="#aaa" stroke-width=".45"/><path d="M392.62 144.8V146" stroke="#aaa" stroke-width=".45"/><path d="M394.40 144.8V146" stroke="#aaa" stroke-width=".45"/><path d="M396.18 143.8V146" stroke="#aaa" stroke-width=".45"/><path d="M397.95 144.8V146" stroke="#aaa" stroke-width=".45"/><path d="M399.73 144.8V146" stroke="#aaa" stroke-width=".45"/><path d="M401.50 144.8V146" stroke="#aaa" stroke-width=".45"/><path d="M403.28 144.8V146" stroke="#aaa" stroke-width=".45"/><path d="M405.05 140.4V146" stroke="#bdbdbd" stroke-width=".6"/><text x="405.85" y="144.2" font-size="3.300" fill="#8e8e8e" font-family="Liberation Sans,sans-serif">2600</text><path d="M406.82 144.8V146" stroke="#aaa" stroke-width=".45"/><path d="M408.60 144.8V146" stroke="#aaa" stroke-width=".45"/><path d="M410.38 144.8V146" stroke="#aaa" stroke-width=".45"/><path d="M412.15 144.8V146" stroke="#aaa" stroke-width=".45"/><path d="M413.93 143.8V146" stroke="#aaa" stroke-width=".45"/><path d="M415.70 144.8V146" stroke="#aaa" stroke-width=".45"/><path d="M417.48 144.8V146" stroke="#aaa" stroke-width=".45"/><path d="M419.25 144.8V146" stroke="#aaa" stroke-width=".45"/><path d="M421.03 144.8V146" stroke="#aaa" stroke-width=".45"/><path d="M422.80 140.4V146" stroke="#bdbdbd" stroke-width=".6"/><text x="423.60" y="144.2" font-size="3.300" fill="#8e8e8e" font-family="Liberation Sans,sans-serif">2800</text><path d="M424.57 144.8V146" stroke="#aaa" stroke-width=".45"/><path d="M426.35 144.8V146" stroke="#aaa" stroke-width=".45"/><path d="M428.12 144.8V146" stroke="#aaa" stroke-width=".45"/><path d="M429.90 144.8V146" stroke="#aaa" stroke-width=".45"/><path d="M431.68 143.8V146" stroke="#aaa" stroke-width=".45"/><path d="M433.45 144.8V146" stroke="#aaa" stroke-width=".45"/><path d="M435.23 144.8V146" stroke="#aaa" stroke-width=".45"/><path d="M437.00 144.8V146" stroke="#aaa" stroke-width=".45"/><path d="M438.78 144.8V146" stroke="#aaa" stroke-width=".45"/><path d="M440.55 140.4V146" stroke="#bdbdbd" stroke-width=".6"/><text x="441.35" y="144.2" font-size="3.300" fill="#8e8e8e" font-family="Liberation Sans,sans-serif">3000</text><path d="M39.4 351.30H45" stroke="#bdbdbd" stroke-width=".6"/><text transform="translate(43.2 350.50) rotate(-90)" font-size="3.300" fill="#8e8e8e" font-family="Liberation Sans,sans-serif">0</text><path d="M43.8 349.51H45" stroke="#aaa" stroke-width=".45"/><path d="M43.8 347.73H45" stroke="#aaa" stroke-width=".45"/><path d="M43.8 345.94H45" stroke="#aaa" stroke-width=".45"/><path d="M43.8 344.16H45" stroke="#aaa" stroke-width=".45"/><path d="M42.8 342.37H45" stroke="#aaa" stroke-width=".45"/><path d="M43.8 340.58H45" stroke="#aaa" stroke-width=".45"/><path d="M43.8 338.80H45" stroke="#aaa" stroke-width=".45"/><path d="M43.8 337.01H45" stroke="#aaa" stroke-width=".45"/><path d="M43.8 335.23H45" stroke="#aaa" stroke-width=".45"/><path d="M39.4 333.44H45" stroke="#bdbdbd" stroke-width=".6"/><text transform="translate(43.2 332.64) rotate(-90)" font-size="3.300" fill="#8e8e8e" font-family="Liberation Sans,sans-serif">200</text><path d="M43.8 331.65H45" stroke="#aaa" stroke-width=".45"/><path d="M43.8 329.87H45" stroke="#aaa" stroke-width=".45"/><path d="M43.8 328.08H45" stroke="#aaa" stroke-width=".45"/><path d="M43.8 326.30H45" stroke="#aaa" stroke-width=".45"/><path d="M42.8 324.51H45" stroke="#aaa" stroke-width=".45"/><path d="M43.8 322.72H45" stroke="#aaa" stroke-width=".45"/><path d="M43.8 320.94H45" stroke="#aaa" stroke-width=".45"/><path d="M43.8 319.15H45" stroke="#aaa" stroke-width=".45"/><path d="M43.8 317.37H45" stroke="#aaa" stroke-width=".45"/><path d="M39.4 315.58H45" stroke="#bdbdbd" stroke-width=".6"/><text transform="translate(43.2 314.78) rotate(-90)" font-size="3.300" fill="#8e8e8e" font-family="Liberation Sans,sans-serif">400</text><path d="M43.8 313.79H45" stroke="#aaa" stroke-width=".45"/><path d="M43.8 312.01H45" stroke="#aaa" stroke-width=".45"/><path d="M43.8 310.22H45" stroke="#aaa" stroke-width=".45"/><path d="M43.8 308.44H45" stroke="#aaa" stroke-width=".45"/><path d="M42.8 306.65H45" stroke="#aaa" stroke-width=".45"/><path d="M43.8 304.86H45" stroke="#aaa" stroke-width=".45"/><path d="M43.8 303.08H45" stroke="#aaa" stroke-width=".45"/><path d="M43.8 301.29H45" stroke="#aaa" stroke-width=".45"/><path d="M43.8 299.51H45" stroke="#aaa" stroke-width=".45"/><path d="M39.4 297.72H45" stroke="#bdbdbd" stroke-width=".6"/><text transform="translate(43.2 296.92) rotate(-90)" font-size="3.300" fill="#8e8e8e" font-family="Liberation Sans,sans-serif">600</text><path d="M43.8 295.93H45" stroke="#aaa" stroke-width=".45"/><path d="M43.8 294.15H45" stroke="#aaa" stroke-width=".45"/><path d="M43.8 292.36H45" stroke="#aaa" stroke-width=".45"/><path d="M43.8 290.58H45" stroke="#aaa" stroke-width=".45"/><path d="M42.8 288.79H45" stroke="#aaa" stroke-width=".45"/><path d="M43.8 287.00H45" stroke="#aaa" stroke-width=".45"/><path d="M43.8 285.22H45" stroke="#aaa" stroke-width=".45"/><path d="M43.8 283.43H45" stroke="#aaa" stroke-width=".45"/><path d="M43.8 281.65H45" stroke="#aaa" stroke-width=".45"/><path d="M39.4 279.86H45" stroke="#bdbdbd" stroke-width=".6"/><text transform="translate(43.2 279.06) rotate(-90)" font-size="3.300" fill="#8e8e8e" font-family="Liberation Sans,sans-serif">800</text><path d="M43.8 278.07H45" stroke="#aaa" stroke-width=".45"/><path d="M43.8 276.29H45" stroke="#aaa" stroke-width=".45"/><path d="M43.8 274.50H45" stroke="#aaa" stroke-width=".45"/><path d="M43.8 272.72H45" stroke="#aaa" stroke-width=".45"/><path d="M42.8 270.93H45" stroke="#aaa" stroke-width=".45"/><path d="M43.8 269.14H45" stroke="#aaa" stroke-width=".45"/><path d="M43.8 267.36H45" stroke="#aaa" stroke-width=".45"/><path d="M43.8 265.57H45" stroke="#aaa" stroke-width=".45"/><path d="M43.8 263.79H45" stroke="#aaa" stroke-width=".45"/><path d="M39.4 262.00H45" stroke="#bdbdbd" stroke-width=".6"/><text transform="translate(43.2 261.20) rotate(-90)" font-size="3.300" fill="#8e8e8e" font-family="Liberation Sans,sans-serif">1000</text><path d="M43.8 260.21H45" stroke="#aaa" stroke-width=".45"/><path d="M43.8 258.43H45" stroke="#aaa" stroke-width=".45"/><path d="M43.8 256.64H45" stroke="#aaa" stroke-width=".45"/><path d="M43.8 254.86H45" stroke="#aaa" stroke-width=".45"/><path d="M42.8 253.07H45" stroke="#aaa" stroke-width=".45"/><path d="M43.8 251.28H45" stroke="#aaa" stroke-width=".45"/><path d="M43.8 249.50H45" stroke="#aaa" stroke-width=".45"/><path d="M43.8 247.71H45" stroke="#aaa" stroke-width=".45"/><path d="M43.8 245.93H45" stroke="#aaa" stroke-width=".45"/><path d="M39.4 244.14H45" stroke="#bdbdbd" stroke-width=".6"/><text transform="translate(43.2 243.34) rotate(-90)" font-size="3.300" fill="#8e8e8e" font-family="Liberation Sans,sans-serif">1200</text><path d="M43.8 242.35H45" stroke="#aaa" stroke-width=".45"/><path d="M43.8 240.57H45" stroke="#aaa" stroke-width=".45"/><path d="M43.8 238.78H45" stroke="#aaa" stroke-width=".45"/><path d="M43.8 237.00H45" stroke="#aaa" stroke-width=".45"/><path d="M42.8 235.21H45" stroke="#aaa" stroke-width=".45"/><path d="M43.8 233.42H45" stroke="#aaa" stroke-width=".45"/><path d="M43.8 231.64H45" stroke="#aaa" stroke-width=".45"/><path d="M43.8 229.85H45" stroke="#aaa" stroke-width=".45"/><path d="M43.8 228.07H45" stroke="#aaa" stroke-width=".45"/><path d="M39.4 226.28H45" stroke="#bdbdbd" stroke-width=".6"/><text transform="translate(43.2 225.48) rotate(-90)" font-size="3.300" fill="#8e8e8e" font-family="Liberation Sans,sans-serif">1400</text><path d="M43.8 224.49H45" stroke="#aaa" stroke-width=".45"/><path d="M43.8 222.71H45" stroke="#aaa" stroke-width=".45"/><path d="M43.8 220.92H45" stroke="#aaa" stroke-width=".45"/><path d="M43.8 219.14H45" stroke="#aaa" stroke-width=".45"/><path d="M42.8 217.35H45" stroke="#aaa" stroke-width=".45"/><path d="M43.8 215.56H45" stroke="#aaa" stroke-width=".45"/><path d="M43.8 213.78H45" stroke="#aaa" stroke-width=".45"/><path d="M43.8 211.99H45" stroke="#aaa" stroke-width=".45"/><path d="M43.8 210.21H45" stroke="#aaa" stroke-width=".45"/><path d="M39.4 208.42H45" stroke="#bdbdbd" stroke-width=".6"/><text transform="translate(43.2 207.62) rotate(-90)" font-size="3.300" fill="#8e8e8e" font-family="Liberation Sans,sans-serif">1600</text><path d="M43.8 206.63H45" stroke="#aaa" stroke-width=".45"/><path d="M43.8 204.85H45" stroke="#aaa" stroke-width=".45"/><path d="M43.8 203.06H45" stroke="#aaa" stroke-width=".45"/><path d="M43.8 201.28H45" stroke="#aaa" stroke-width=".45"/><path d="M42.8 199.49H45" stroke="#aaa" stroke-width=".45"/><path d="M43.8 197.70H45" stroke="#aaa" stroke-width=".45"/><path d="M43.8 195.92H45" stroke="#aaa" stroke-width=".45"/><path d="M43.8 194.13H45" stroke="#aaa" stroke-width=".45"/><path d="M43.8 192.35H45" stroke="#aaa" stroke-width=".45"/><path d="M39.4 190.56H45" stroke="#bdbdbd" stroke-width=".6"/><text transform="translate(43.2 189.76) rotate(-90)" font-size="3.300" fill="#8e8e8e" font-family="Liberation Sans,sans-serif">1800</text><path d="M43.8 188.77H45" stroke="#aaa" stroke-width=".45"/><path d="M43.8 186.99H45" stroke="#aaa" stroke-width=".45"/><path d="M43.8 185.20H45" stroke="#aaa" stroke-width=".45"/><path d="M43.8 183.42H45" stroke="#aaa" stroke-width=".45"/><path d="M42.8 181.63H45" stroke="#aaa" stroke-width=".45"/><path d="M43.8 179.84H45" stroke="#aaa" stroke-width=".45"/><path d="M43.8 178.06H45" stroke="#aaa" stroke-width=".45"/><path d="M43.8 176.27H45" stroke="#aaa" stroke-width=".45"/><path d="M43.8 174.49H45" stroke="#aaa" stroke-width=".45"/><path d="M39.4 172.70H45" stroke="#bdbdbd" stroke-width=".6"/><text transform="translate(43.2 171.90) rotate(-90)" font-size="3.300" fill="#8e8e8e" font-family="Liberation Sans,sans-serif">2000</text><path d="M43.8 170.91H45" stroke="#aaa" stroke-width=".45"/><path d="M43.8 169.13H45" stroke="#aaa" stroke-width=".45"/><path d="M43.8 167.34H45" stroke="#aaa" stroke-width=".45"/><path d="M43.8 165.56H45" stroke="#aaa" stroke-width=".45"/><path d="M42.8 163.77H45" stroke="#aaa" stroke-width=".45"/><path d="M43.8 161.98H45" stroke="#aaa" stroke-width=".45"/><path d="M43.8 160.20H45" stroke="#aaa" stroke-width=".45"/><path d="M43.8 158.41H45" stroke="#aaa" stroke-width=".45"/><path d="M43.8 156.63H45" stroke="#aaa" stroke-width=".45"/><path d="M39.4 154.84H45" stroke="#bdbdbd" stroke-width=".6"/><text transform="translate(43.2 154.04) rotate(-90)" font-size="3.300" fill="#8e8e8e" font-family="Liberation Sans,sans-serif">2200</text><path d="M43.8 153.05H45" stroke="#aaa" stroke-width=".45"/><path d="M43.8 151.27H45" stroke="#aaa" stroke-width=".45"/><path d="M43.8 149.48H45" stroke="#aaa" stroke-width=".45"/><path d="M43.8 147.70H45" stroke="#aaa" stroke-width=".45"/><defs><pattern id="gr" x="174.3" y="136.860" width="4.4675" height="4.4675" patternUnits="userSpaceOnUse"><path d="M0 0H4.4675M0 0V4.4675" stroke="#1a1a1a" stroke-width=".6" fill="none"/></pattern><pattern id="gr2" x="174.3" y="136.860" width="17.870" height="17.870" patternUnits="userSpaceOnUse"><path d="M0 0H17.870M0 0V17.870" stroke="#252525" stroke-width=".6" fill="none"/></pattern><clipPath id="cv"><rect x="45" y="146" width="398.4" height="210.4"/></clipPath></defs><g clip-path="url(#cv)"><rect x="174.3" y="146" width="133.09999999999997" height="204.60000000000002" fill="url(#gr)"/><rect x="174.3" y="146" width="133.09999999999997" height="204.60000000000002" fill="url(#gr2)"/><g transform="translate(170 236.0)"><path d="M14.4 12.5V5.6H56.9V12.5H71.9 M64.4 12.5V35.6 M64.4 23.1H56.25V30.6 M55.4 30.6H25.6 M25.6 23.1V31.2 M15 29.4Q15.3 34 20 34.3Q24.8 34.4 25.6 31.2 M23.75 41.5V33.75H53.75V41.5 M16.25 41.5H23.75 M53.75 34.6Q54 30.4 58.9 29.9Q63.6 30.4 64.9 35.8 M14.4 12.5H7.5V51.5H15V29.4 M16.25 41.5V52.1H23.75V59H71.9 M65 59V52.1H71.9 M71.9 12.5V59" fill="none" stroke="#00dc00" stroke-width="1.2"/><rect x="23.3" y="17.7" width=".9" height=".9" fill="#1020ff"/><rect x="42.7" y="17.7" width=".9" height=".9" fill="#1020ff"/><path d="M36.9 46.6v1.2M56.3 46.6v1.2" stroke="#00a000" stroke-width=".7"/><circle cx="63.7" cy="12.5" r="1.1" fill="#f4fff4"/><circle cx="16.4" cy="41.5" r="1.1" fill="#f4fff4"/></g><g transform="translate(235 236.0)"><path d="M14.4 12.5V5.6H56.9V12.5H71.9 M64.4 12.5V35.6 M64.4 23.1H56.25V30.6 M55.4 30.6H25.6 M25.6 23.1V31.2 M15 29.4Q15.3 34 20 34.3Q24.8 34.4 25.6 31.2 M23.75 41.5V33.75H53.75V41.5 M16.25 41.5H23.75 M53.75 34.6Q54 30.4 58.9 29.9Q63.6 30.4 64.9 35.8 M14.4 12.5H7.5V51.5H15V29.4 M16.25 41.5V52.1H23.75V59H71.9 M65 59V52.1H71.9 M71.9 12.5V59" fill="none" stroke="#00dc00" stroke-width="1.2"/><rect x="23.3" y="17.7" width=".9" height=".9" fill="#1020ff"/><rect x="42.7" y="17.7" width=".9" height=".9" fill="#1020ff"/><path d="M36.9 46.6v1.2M56.3 46.6v1.2" stroke="#00a000" stroke-width=".7"/><circle cx="63.7" cy="12.5" r="1.1" fill="#f4fff4"/><circle cx="16.4" cy="41.5" r="1.1" fill="#f4fff4"/></g><g transform="translate(170 290.65)"><path d="M14.4 12.5V5.6H56.9V12.5H71.9 M64.4 12.5V35.6 M64.4 23.1H56.25V30.6 M55.4 30.6H25.6 M25.6 23.1V31.2 M15 29.4Q15.3 34 20 34.3Q24.8 34.4 25.6 31.2 M23.75 41.5V33.75H53.75V41.5 M16.25 41.5H23.75 M53.75 34.6Q54 30.4 58.9 29.9Q63.6 30.4 64.9 35.8 M14.4 12.5H7.5V51.5H15V29.4 M16.25 41.5V52.1H23.75V59H71.9 M65 59V52.1H71.9 M71.9 12.5V59" fill="none" stroke="#00dc00" stroke-width="1.2"/><rect x="23.3" y="17.7" width=".9" height=".9" fill="#00a000"/><rect x="42.7" y="17.7" width=".9" height=".9" fill="#00a000"/><path d="M36.9 46.6v1.2M56.3 46.6v1.2" stroke="#00a000" stroke-width=".7"/><circle cx="63.7" cy="12.5" r="1.1" fill="#f4fff4"/><circle cx="16.4" cy="41.5" r="1.1" fill="#f4fff4"/></g><g transform="translate(235 290.65)"><path d="M14.4 12.5V5.6H56.9V12.5H71.9 M64.4 12.5V35.6 M64.4 23.1H56.25V30.6 M55.4 30.6H25.6 M25.6 23.1V31.2 M15 29.4Q15.3 34 20 34.3Q24.8 34.4 25.6 31.2 M23.75 41.5V33.75H53.75V41.5 M16.25 41.5H23.75 M53.75 34.6Q54 30.4 58.9 29.9Q63.6 30.4 64.9 35.8 M14.4 12.5H7.5V51.5H15V29.4 M16.25 41.5V52.1H23.75V59H71.9 M65 59V52.1H71.9 M71.9 12.5V59" fill="none" stroke="#00dc00" stroke-width="1.2"/><rect x="23.3" y="17.7" width=".9" height=".9" fill="#00a000"/><rect x="42.7" y="17.7" width=".9" height=".9" fill="#00a000"/><path d="M36.9 46.6v1.2M56.3 46.6v1.2" stroke="#00a000" stroke-width=".7"/><circle cx="63.7" cy="12.5" r="1.1" fill="#f4fff4"/><circle cx="16.4" cy="41.5" r="1.1" fill="#f4fff4"/></g><path d="M174.3 140V350.6H307.4V140" fill="none" stroke="#00dc00" stroke-width="1.300"/><circle cx="307.4" cy="150.8" r="1.1" fill="#f4fff4"/><rect x="203.8" y="217.6" width="43.6" height="22.8" rx="1.6" fill="none" stroke="#0a14ff" stroke-width="1.4"/><rect x="248.4" y="210.2" width="57.8" height="30.2" rx="1.6" fill="none" stroke="#0a14ff" stroke-width="1.4"/><rect x="217.800" y="222.500" width="7.800" height="3.600" rx=".8" fill="none" stroke="#0a14ff" stroke-width=".9"/><rect x="217.800" y="229.600" width="7.800" height="3.700" rx=".8" fill="none" stroke="#0a14ff" stroke-width=".9"/><path d="M251.4 218.2l2.4-3h2.6l1.2 3-2.4 2.8h-2z" fill="none" stroke="#0a14ff" stroke-width=".9"/><rect x="241.6" y="226.6" width=".9" height=".9" fill="#0a14c8"/><rect x="241.6" y="237.6" width=".9" height=".9" fill="#0a14c8"/><rect x="250.8" y="237.8" width=".9" height=".9" fill="#0a14c8"/><rect x="300.6" y="235.8" width=".9" height=".9" fill="#0a14c8"/><circle cx="203.9" cy="218.4" r="1.05" fill="#f0f4ff"/><circle cx="217.9" cy="222.6" r="1.05" fill="#f0f4ff"/><circle cx="217.9" cy="229.9" r="1.05" fill="#f0f4ff"/><circle cx="248.4" cy="210.8" r="1.05" fill="#f0f4ff"/><circle cx="257.4" cy="218.2" r="1.05" fill="#f0f4ff"/><path d="M45 262.1H443.4" stroke="#a30000" stroke-width="1.400"/><text x="139.8" y="267.4" font-size="4.2" fill="#c83030" font-family="Liberation Sans,Noto Sans CJK SC,sans-serif">真实分割线</text><path d="M45 351.3H443.4" stroke="#0a700a" stroke-width=".8" stroke-dasharray=".9 .7"/><g transform="translate(174 351.2)"><circle r="3" fill="none" stroke="#a89010" stroke-width=".8" stroke-dasharray="1.4 .7"/><path d="M-4.600 0H4.600M0 -4.600V4.600" stroke="#b8a420" stroke-width=".6"/><rect x="-.9" y="-.9" width="1.800" height="1.800" fill="#c07818"/><rect x="-4.400" y="-.8" width="1.600" height="1.600" fill="#c8c8b0"/><rect x="-.7" y="3" width="1.400" height="1.800" fill="#e0c840"/><path d="M2 -3.4l1.6 -.8" stroke="#e03030" stroke-width=".6"/></g></g><path d="M39.400 262.100H45.200" stroke="#a30000" stroke-width="1.400"/></svg>
<div class="a" style="left:30.4px;top:142.2px;width:7.8px;height:8.6px;border:.6px solid #bbb;background:#222"></div><svg class="a" style="left:30.299999999999997px;top:142.6px" width="8" height="8" viewBox="0 0 8 8"><path d="M2.4 .8l3.8 3.8H4.6l.9 1.9-.9.4-.9-1.9L2.4 6.2z" fill="#e6e6e6"/></svg><svg class="a" style="left:30.299999999999997px;top:152.6px" width="8" height="8" viewBox="0 0 8 8"><path d="M1.6 4.2V2.6l.9-.3v-1l.9-.2.3-.5.9.3.2.5.9.3v3.5L5.6 7H3.2z" fill="#e6e6e6"/></svg><svg class="a" style="left:30.299999999999997px;top:162px" width="8" height="8" viewBox="0 0 8 8"><rect x="1.4" y="1.2" width="5.2" height="5.6" fill="none" stroke="#e6e6e6" stroke-width=".8"/><path d="M1.4 3.2h5.2M4 3.2v3.6" stroke="#e6e6e6" stroke-width=".7"/></svg><svg class="a" style="left:30.299999999999997px;top:171.8px" width="8" height="8" viewBox="0 0 8 8"><circle cx="3.3" cy="3.2" r="2" fill="none" stroke="#e6e6e6" stroke-width="1"/><path d="M4.6 4.6l2.2 2.4" stroke="#e6e6e6" stroke-width="1.2"/></svg><svg class="a" style="left:30.299999999999997px;top:181.6px" width="8" height="8" viewBox="0 0 8 8"><rect x="1" y="2.8" width="6" height="2.4" fill="none" stroke="#e6e6e6" stroke-width=".8"/></svg><div class="a" style="left:31.6px;top:191.6px;width:5.4px;height:.6px;background:#444"></div><svg class="a" style="left:30.299999999999997px;top:194px" width="8" height="8" viewBox="0 0 8 8"><rect x="3.2" y="3.2" width="1.7" height="1.7" fill="#e6e6e6"/></svg><svg class="a" style="left:30.299999999999997px;top:203.6px" width="8" height="8" viewBox="0 0 8 8"><path d="M1 5.6l2.4-3.2 2 2.2L7 2" fill="none" stroke="#e6e6e6" stroke-width=".8"/><circle cx="5.2" cy="4.8" r="1" fill="none" stroke="#e6e6e6" stroke-width=".6"/></svg><svg class="a" style="left:30.299999999999997px;top:213.4px" width="8" height="8" viewBox="0 0 8 8"><path d="M1.8 1.6l4.6 5" stroke="#e6e6e6" stroke-width="1"/></svg><svg class="a" style="left:30.299999999999997px;top:223.4px" width="8" height="8" viewBox="0 0 8 8"><path d="M2 6.4A3 3 0 0 1 6.2 2.4" fill="none" stroke="#e6e6e6" stroke-width=".9"/><path d="M6.2 2.4l.4 1.6" stroke="#e6e6e6" stroke-width=".7"/></svg><svg class="a" style="left:30.299999999999997px;top:233px" width="8" height="8" viewBox="0 0 8 8"><path d="M2 6.4A3 3 0 1 1 6.6 4.4" fill="none" stroke="#e6e6e6" stroke-width=".9"/></svg><svg class="a" style="left:30.299999999999997px;top:242.4px" width="8" height="8" viewBox="0 0 8 8"><circle cx="4" cy="4" r="2.7" fill="#909090" stroke="#d4d4d4" stroke-width=".7"/><path d="M1.6 4h4.8" stroke="#333" stroke-width=".5"/></svg><svg class="a" style="left:30.299999999999997px;top:252.2px" width="8" height="8" viewBox="0 0 8 8"><ellipse cx="4" cy="4" rx="3" ry="2.5" fill="#8a8a8a" stroke="#d4d4d4" stroke-width=".7"/><path d="M1.2 4h5.6" stroke="#333" stroke-width=".5"/></svg><svg class="a" style="left:30.299999999999997px;top:261.8px" width="8" height="8" viewBox="0 0 8 8"><circle cx="4" cy="4" r="2.7" fill="#909090" stroke="#d4d4d4" stroke-width=".7"/><circle cx="4" cy="4" r="1" fill="#444"/></svg><svg class="a" style="left:30.299999999999997px;top:271.6px" width="8" height="8" viewBox="0 0 8 8"><path d="M4 .8l1 2.2 2.4.3-1.8 1.6.5 2.4L4 6.1 1.9 7.3l.5-2.4L.6 3.3 3 3z" fill="#e6e6e6"/></svg><svg class="a" style="left:30.299999999999997px;top:281.4px" width="8" height="8" viewBox="0 0 8 8"><rect x="1" y="1.8" width="6" height="4.4" fill="#909090" stroke="#d4d4d4" stroke-width=".7"/><path d="M1 3.4h6" stroke="#333" stroke-width=".5"/></svg><svg class="a" style="left:30.299999999999997px;top:291.2px" width="8" height="8" viewBox="0 0 8 8"><rect x="1" y="1.6" width="6" height="4.8" rx="1.2" fill="#909090" stroke="#d4d4d4" stroke-width=".7"/><path d="M1 3.6h6" stroke="#333" stroke-width=".6"/></svg><svg class="a" style="left:30.299999999999997px;top:300.8px" width="8" height="8" viewBox="0 0 8 8"><ellipse cx="4" cy="4" rx="3" ry="2.3" fill="#8a8a8a" stroke="#d4d4d4" stroke-width=".7"/><path d="M1.2 4h5.6" stroke="#333" stroke-width=".5"/></svg><svg class="a" style="left:30.299999999999997px;top:310.2px" width="8" height="8" viewBox="0 0 8 8"><path d="M1.6 1.4h4.8v1.4H4.8v4H3.2v-4H1.6z" fill="#e6e6e6"/></svg><div class="a" style="left:31.6px;top:320.8px;width:5.4px;height:.6px;background:#444"></div><div class="a" style="left:30.8px;top:323.6px;width:7px;height:7.8px;border:.6px solid #bbb;background:#222"></div><svg class="a" style="left:30.299999999999997px;top:323.6px" width="8" height="8" viewBox="0 0 8 8"><path d="M2.6 2h2.8v4H2.6zM4.6 2.6v1.6" fill="none" stroke="#e6e6e6" stroke-width=".8"/></svg><svg class="a" style="left:30.299999999999997px;top:333px" width="8" height="8" viewBox="0 0 8 8"><circle cx="4" cy="4" r="2.8" fill="none" stroke="#999" stroke-width=".7"/><path d="M4 2.4v3.2" stroke="#999" stroke-width=".6"/></svg><svg class="a" style="left:30.299999999999997px;top:342.2px" width="8" height="8" viewBox="0 0 8 8"><path d="M4 1v6M1 4h6" stroke="#aaa" stroke-width=".7" stroke-dasharray="1.6 .8"/></svg><svg class="a" style="left:30.299999999999997px;top:351px" width="8" height="8" viewBox="0 0 8 8"><path d="M3 2.4l1.6 1.6L3 5.6" stroke="#bbb" stroke-width=".8" fill="none"/><circle cx="3.4" cy="6.4" r=".8" fill="#ddd"/></svg>
<div class="a" style="left:443.4px;top:138.6px;width:11.6px;height:224px;background:#191919"></div><svg class="a" style="left:444.4px;top:141.6px" width="8" height="8" viewBox="0 0 8 8"><path d="M4 .6l3.4 1.8L4 4.2.6 2.4z" fill="#eee"/><path d="M.8 4l3.2 1.7L7.2 4M.8 5.6l3.2 1.7 3.2-1.7" fill="none" stroke="#eee" stroke-width=".8"/></svg><div class="t" style="left:446.4px;top:151px;font-size:3.6px;line-height:4.2px;color:#ccc;white-space:normal;width:4px">图层</div><div class="a" style="left:444.6px;top:163.8px;width:7.4px;height:7.4px;border:.7px solid #a4a4a4;background:#1a1a1a"></div><svg class="a" style="left:445.4px;top:164.6px" width="6" height="6" viewBox="0 0 6 6"><path d="M1.4 3.2l1.2 1.2L4.8 1.6" fill="none" stroke="#18c018" stroke-width="1"/></svg><div class="a" style="left:444.6px;top:172.6px;width:7.4px;height:7.4px;border:.7px solid #a4a4a4;background:#1a1a1a"></div><svg class="a" style="left:445.4px;top:173.4px" width="6" height="6" viewBox="0 0 6 6"><path d="M1.6 1.6l2.8 2.8M4.4 1.6L1.6 4.4" fill="none" stroke="#e01010" stroke-width="1.1"/></svg><div class="a" style="left:444.8px;top:181.50px;width:7.3px;height:7.2px;background:#f4f000"></div><div class="a" style="left:444.8px;top:190.22px;width:7.3px;height:7.2px;background:#0000f0"></div><div class="a" style="left:444.8px;top:198.94px;width:7.3px;height:7.2px;background:#00f0f0"></div><div class="a" style="left:444.8px;top:207.66px;width:7.3px;height:7.2px;background:#ff80b0"></div><div class="a" style="left:444.8px;top:216.38px;width:7.3px;height:7.2px;background:#80a0ff"></div><div class="a" style="left:444.8px;top:225.10px;width:7.3px;height:7.2px;background:#9000c0"></div><div class="a" style="left:444.8px;top:233.82px;width:7.3px;height:7.2px;background:#883858"></div>
<div class="t" style="left:40.600px;top:357.600px;font-size:3.900px;color:#e0e0e0">6.754%</div><svg class="a" style="left:66px;top:358.800px" width="3" height="2" viewBox="0 0 3 2"><path d="M0 0h3L1.500 2z" fill="#9a9a9a"/></svg><div class="t" style="left:71.900px;top:357.500px;font-size:3.900px;letter-spacing:-.15px;color:#eee">步 距(mm)</div><div class="a" style="left:90.700px;top:357px;width:18.800px;height:5px;border:.6px solid #8a8a8a;background:#0a0a0a"></div><div class="t" style="left:92.400px;top:357.800px;font-size:3.600px;color:#ddd">10</div>
<div class="a" style="left:30px;top:362.4px;width:425px;height:28.8px;background:linear-gradient(#474747,#3a3a3a 45%,#2c2c2c)"></div>
<div class="a" style="left:30px;top:391px;width:425px;height:.9px;background:#262626"></div>
<div class="a" style="left:30.6px;top:362.4px;width:35.4px;height:29.4px;background:linear-gradient(#141414,#1a1a1a 60%,#242424)"></div>
<div class="a" style="left:31px;top:390.2px;width:34.8px;height:1.7px;background:#18a8cc;border-radius:0 0 0 2px"></div>
<svg class="a" style="left:40.70px;top:365.400px" width="13.800" height="13.800" viewBox="0 0 12 12"><path d="M2.300 2.200L9.800 9.800" stroke="#1cb4dc" stroke-width="3.300" stroke-linecap="butt"/><path d="M2.600 2.500L9.500 9.500" stroke="#161a1e" stroke-width="1.400"/><path d="M9.900 2.100L3.200 8.900" stroke="#1cb4dc" stroke-width="3.300" stroke-linecap="butt"/><path d="M9.500 2.500L3.600 8.500" stroke="#161a1e" stroke-width="1.400"/><path d="M1.100 11l.9-3.300 2.400 2.400z" fill="#1cb4dc"/><path d="M7.800 2.900l1.400 1.400" stroke="#1cb4dc" stroke-width=".7"/></svg>
<div class="t" style="left:27.60px;width:40px;text-align:center;top:383.700px;font-size:5.250px;color:#1cb4dc">加工</div>
<svg class="a" style="left:76.50px;top:365.400px" width="13.800" height="13.800" viewBox="0 0 12 12"><path d="M6 1l5.2 2.8L6 6.6.8 3.8z" fill="none" stroke="#ececec" stroke-width=".9"/><path d="M.8 6.6L6 9.6l5.2-3L6 8.2z" fill="#ececec" stroke="#ececec" stroke-width=".8" stroke-linejoin="round"/></svg>
<div class="t" style="left:63.40px;width:40px;text-align:center;top:383.700px;font-size:5.250px;color:#ececec">工艺</div>
<svg class="a" style="left:112.40px;top:365.400px" width="13.800" height="13.800" viewBox="0 0 12 12"><rect x="1" y="1.4" width="10" height="8.6" rx=".8" fill="none" stroke="#ececec" stroke-width=".9"/><path d="M2.6 8l2.2-2.2 1.6 1L9.4 3.600" fill="none" stroke="#ececec" stroke-width=".9"/><path d="M1 11.200h10" stroke="#ececec" stroke-width=".8"/></svg>
<div class="t" style="left:99.30px;width:40px;text-align:center;top:383.700px;font-size:5.250px;color:#ececec">监控</div>
<svg class="a" style="left:148.30px;top:365.400px" width="13.800" height="13.800" viewBox="0 0 12 12"><path d="M2 .8h8v9.2H2z" fill="none" stroke="#ececec" stroke-width=".9"/><path d="M5 .8v4l1.2-.9 1.200.9V.8M2 11.2h8.800V2" fill="none" stroke="#ececec" stroke-width=".8"/></svg>
<div class="t" style="left:135.20px;width:40px;text-align:center;top:383.700px;font-size:5.250px;color:#ececec">运行报告</div>
<svg class="a" style="left:184.20px;top:365.400px" width="13.800" height="13.800" viewBox="0 0 12 12"><path d="M10.00 5.11L11.26 5.34L11.26 6.66L10.00 6.89L9.46 8.20L10.19 9.25L9.25 10.19L8.20 9.46L6.89 10.00L6.66 11.26L5.34 11.26L5.11 10.00L3.80 9.46L2.75 10.19L1.81 9.25L2.54 8.20L2.00 6.89L0.74 6.66L0.74 5.34L2.00 5.11L2.54 3.80L1.81 2.75L2.75 1.81L3.80 2.54L5.11 2.00L5.34 0.74L6.66 0.74L6.89 2.00L8.20 2.54L9.25 1.81L10.19 2.75L9.46 3.80z" fill="none" stroke="#ececec" stroke-width=".85" stroke-linejoin="round"/><circle cx="6" cy="6" r="2.1" fill="none" stroke="#ececec" stroke-width=".8"/><path d="M6 4.900v2M5.200 6.100l.8.900.8-.9" stroke="#ececec" stroke-width=".5" fill="none"/></svg>
<div class="t" style="left:171.10px;width:40px;text-align:center;top:383.700px;font-size:5.250px;color:#ececec">设置</div>
<svg class="a" style="left:220.10px;top:365.400px" width="13.800" height="13.800" viewBox="0 0 12 12"><path d="M2.200 10.200L7.300 5.100" stroke="#ececec" stroke-width="1.700" stroke-linecap="round"/><path d="M6.900 5.500A2.500 2.500 0 0 1 9.700 1.500L8.300 2.900L9.400 4L10.800 2.600A2.500 2.500 0 0 1 6.900 5.500z" fill="#ececec" stroke="#ececec" stroke-width=".5" stroke-linejoin="round"/><path d="M1.600 1.600l1.300.3L6 5" stroke="#ececec" stroke-width=".9" fill="none" stroke-linecap="round"/><path d="M7.600 7.400l2.700 2.700" stroke="#ececec" stroke-width="2" stroke-linecap="round"/></svg>
<div class="t" style="left:207.00px;width:40px;text-align:center;top:383.700px;font-size:5.250px;color:#ececec">维护</div>
<svg class="a" style="left:256.00px;top:365.400px" width="13.800" height="13.800" viewBox="0 0 12 12"><rect x="1.600" y="1" width="7.600" height="9.400" rx="1" fill="none" stroke="#ececec" stroke-width=".9"/><path d="M3 3.600h4.800M3 5.600h2.400" stroke="#ececec" stroke-width=".8"/><circle cx="8.800" cy="8.600" r="2.400" fill="#3a3a3a" stroke="#ececec" stroke-width=".8"/><circle cx="8.800" cy="8.600" r=".9" fill="#ececec"/></svg>
<div class="t" style="left:242.90px;width:40px;text-align:center;top:383.700px;font-size:5.250px;color:#ececec">高级</div>
<style>
.rp{position:absolute;background:#232323}
.jb{position:absolute;background:linear-gradient(#3e3e3e,#333);border-radius:2px;box-shadow:inset 0 .5px 0 #4a4a4a,0 0 0 .7px #171717}
.gb{position:absolute;width:20.4px;height:20.4px;background:linear-gradient(#3e3e3e,#323232);border-radius:2.2px;box-shadow:inset 0 .5px 0 #4a4a4a,0 0 0 .7px #171717}
.gl{position:absolute;left:-4.8px;width:30px;text-align:center;top:14.9px;font-size:4.05px;font-weight:bold;color:#f0f0f0;white-space:nowrap}
.gl.dim{color:#8a8a8a;font-weight:normal}
.cv{position:absolute;font-family:"Liberation Mono",monospace;font-size:5.2px;color:#1aa0c4;font-weight:bold;white-space:nowrap}
.hd{position:absolute;font-size:4.500px;color:#dadada;white-space:nowrap;top:61.500px}
</style>
<div class="rp" style="left:455px;top:29px;width:155.6px;height:362.4px;border-radius:0 3px 3px 0"></div>
<div class="a" style="left:455px;top:24.300px;width:155.700px;height:12px;background:#2a2a2a;border-radius:0 6px 0 0"></div><div class="a" style="left:455px;top:31px;width:155.800px;height:8px;background:#232323"></div>
<div class="a" style="left:455px;top:30.4px;width:155.6px;height:.7px;background:#181818"></div>
<div class="a" style="left:500.8px;top:28.3px;width:79.6px;height:1.4px;background:#3b5d8c"></div>
<div class="a" style="left:458.6px;top:32.4px;width:148.6px;height:20.6px;background:#262626;border:.6px solid #363636;border-radius:2px"></div>
<div class="a" style="left:458.8px;top:32.5px;width:73.4px;height:20.4px;background:linear-gradient(100deg,#dcae42,#c99a34 55%,#b88a2c);border:.7px solid #eec860;border-radius:2px"></div>
<svg class="a" style="left:465.6px;top:35.8px" width="13" height="13" viewBox="0 0 13 13"><circle cx="6.5" cy="6.5" r="5.7" fill="none" stroke="#f4e6b8" stroke-width=".8"/><circle cx="6.5" cy="6.5" r="4.2" fill="none" stroke="#f4e6b8" stroke-width=".6"/><path d="M4.4 4.600l2.100 2.600 2.100-2.600M6.500 7.200v1.400M4.600 9h3.800" fill="none" stroke="#f4e6b8" stroke-width=".7"/></svg>
<div class="t" style="left:480.800px;top:40.400px;font-size:4.100px;color:#f4e8c4">波浪加工</div>
<svg class="a" style="left:540.800px;top:37.200px" width="12" height="11" viewBox="0 0 12 11"><rect x="2.800" y=".6" width="8.600" height="4" rx="1.100" fill="none" stroke="#ddd" stroke-width=".8"/><rect x="2.800" y="6.200" width="8.600" height="4" rx="1.100" fill="none" stroke="#ddd" stroke-width=".8"/><path d="M.3 2.600h2M.3 5.400h11.400M.3 8.200h2" stroke="#ddd" stroke-width=".8"/><rect x=".6" y=".4" width="1.200" height="1.200" fill="#ddd"/></svg>
<div class="t" style="left:555px;top:40.700px;font-size:4.100px;color:#e4e4e4;text-decoration:underline;text-decoration-thickness:.4px;text-decoration-color:#b0b0b0;text-underline-offset:.6px">批量加工</div>
<div class="a" style="left:458.2px;top:56.4px;width:149.2px;height:69px;background:#000;border-radius:2px"></div>
<div class="hd" style="left:464px">轴</div>
<svg class="a" style="left:475.4px;top:59.8px" width="11" height="7.400" viewBox="0 0 11 7.4"><path d="M.8 0h7.400l2.600 3.700-2.600 3.700H.8a.8.8 0 0 1-.8-.8V.8A.8.8 0 0 1 .8 0z" fill="#f6d400"/></svg>
<div class="t" style="left:476.200px;top:62.400px;font-size:4.700px;font-weight:bold;letter-spacing:-.3px;color:#2a2000">G54</div>
<div class="hd" style="left:497px">机械坐标</div>
<svg class="a" style="left:520.700px;top:61.800px" width="4" height="4" viewBox="0 0 5 5"><path d="M.4 2.500a2 2 0 0 1 3.600-1M4.600 2.500a2 2 0 0 1-3.600 1" fill="none" stroke="#ddd" stroke-width=".7"/></svg>
<div class="hd" style="left:532px">反馈坐标</div>
<div class="hd" style="left:588px">低速</div>
<div class="a" style="left:599.8px;top:61.4px;width:3.800px;height:3.800px;border:.9px solid #eee;border-radius:50%"></div>
<svg class="a" style="left:458.800px;top:75.7px" width="6" height="6" viewBox="0 0 6 6"><circle cx="3" cy="3" r="2.300" fill="#f4f4f4"/><path d="M3 3V.7A2.300 2.300 0 0 1 5.300 3zM3 3v2.300A2.300 2.300 0 0 1 .7 3z" fill="#111"/></svg>
<div class="t" style="left:468px;top:76.60000000000001px;font-size:5px;color:#dcdcdc">X</div>
<div class="cv" style="left:500.600px;top:76.5px">0.000</div>
<div class="cv" style="left:533.800px;top:76.5px">0.000</div>
<div class="cv" style="left:575.800px;top:76.5px;font-size:4.800px;width:12px;text-align:right">6000</div>
<div class="t" style="left:589.400px;top:77.7px;font-size:3.300px;color:#ececec">mm/min</div>
<svg class="a" style="left:458.800px;top:85.7px" width="6" height="6" viewBox="0 0 6 6"><circle cx="3" cy="3" r="2.300" fill="#f4f4f4"/><path d="M3 3V.7A2.300 2.300 0 0 1 5.300 3zM3 3v2.300A2.300 2.300 0 0 1 .7 3z" fill="#111"/></svg>
<div class="t" style="left:468px;top:86.60000000000001px;font-size:5px;color:#dcdcdc">Y</div>
<div class="cv" style="left:500.600px;top:86.5px">0.000</div>
<div class="cv" style="left:533.800px;top:86.5px">0.000</div>
<div class="cv" style="left:575.800px;top:86.5px;font-size:4.800px;width:12px;text-align:right">6000</div>
<div class="t" style="left:589.400px;top:87.7px;font-size:3.300px;color:#ececec">mm/min</div>
<svg class="a" style="left:458.800px;top:94.8px" width="6" height="6" viewBox="0 0 6 6"><circle cx="3" cy="3" r="2.300" fill="#f4f4f4"/><path d="M3 3V.7A2.300 2.300 0 0 1 5.300 3zM3 3v2.300A2.300 2.300 0 0 1 .7 3z" fill="#111"/></svg>
<div class="t" style="left:468px;top:95.7px;font-size:5px;color:#dcdcdc">Z</div>
<div class="cv" style="left:500.600px;top:95.6px">0.000</div>
<div class="cv" style="left:533.800px;top:95.6px">0.000</div>
<div class="cv" style="left:575.800px;top:95.6px;font-size:4.800px;width:12px;text-align:right">1200</div>
<div class="t" style="left:589.400px;top:96.8px;font-size:3.300px;color:#ececec">mm/min</div>
<div class="a" style="left:551.800px;top:75px;width:.6px;height:34.600px;background:#3c3c3c"></div>
<div class="a" style="left:493.800px;top:129.200px;width:2.600px;height:2.600px;background:#10e010;border-radius:50%"></div>
<div class="t" style="left:498.700px;top:128px;font-size:5.100px;color:#f0f0f0">通道1(JOG)</div>
<div class="a" style="left:539.800px;top:128.800px;width:3.200px;height:3.200px;border:.6px solid #777;border-radius:50%;background:#151515"></div>
<div class="t" style="left:545.700px;top:128px;font-size:5.100px;color:#f0f0f0">通道2(JOG)</div>
<div class="jb" style="left:491.2px;top:140.2px;width:16px;height:16px"><svg class="a" style="left:4.500px;top:4.700px" width="7" height="7" viewBox="0 0 7 7"><g transform="rotate(0 3.500 3.500)"><path d="M3.500 .4L6.600 3.600H4.600V6.400H2.400V3.600H.4z" fill="#fff"/></g></svg></div>
<div class="jb" style="left:466.2px;top:161px;width:16px;height:16px"><svg class="a" style="left:4.500px;top:4.700px" width="7" height="7" viewBox="0 0 7 7"><g transform="rotate(-90 3.500 3.500)"><path d="M3.500 .4L6.600 3.600H4.600V6.400H2.400V3.600H.4z" fill="#fff"/></g></svg></div>
<div class="jb" style="left:491.2px;top:161px;width:16px;height:16px"><div class="t" style="left:0;width:16px;text-align:center;top:6.200px;font-size:4.200px;font-weight:bold;color:#eee">高速</div></div>
<div class="jb" style="left:516px;top:161px;width:16px;height:16px"><svg class="a" style="left:4.500px;top:4.700px" width="7" height="7" viewBox="0 0 7 7"><g transform="rotate(90 3.500 3.500)"><path d="M3.500 .4L6.600 3.600H4.600V6.400H2.400V3.600H.4z" fill="#fff"/></g></svg></div>
<div class="jb" style="left:491.2px;top:181.6px;width:16px;height:16px"><svg class="a" style="left:4.500px;top:4.700px" width="7" height="7" viewBox="0 0 7 7"><g transform="rotate(180 3.500 3.500)"><path d="M3.500 .4L6.600 3.600H4.600V6.400H2.400V3.600H.4z" fill="#fff"/></g></svg></div>
<div class="jb" style="left:541px;top:140.2px;width:16.2px;height:16px"><div class="t" style="left:0;width:16.200px;text-align:center;top:6.200px;font-size:4.800px;font-weight:bold;color:#eee">Z+</div></div>
<div class="jb" style="left:541px;top:181.6px;width:16.2px;height:16px"><div class="t" style="left:0;width:16.200px;text-align:center;top:6.200px;font-size:4.800px;font-weight:bold;color:#eee">Z-</div></div>
<div class="jb" style="left:570.2px;top:140.2px;width:32.2px;height:11.2px"><svg class="a" style="left:2.600px;top:2.900px" width="8" height="6" viewBox="0 0 8 6"><path d="M3.400 .4L.8 3l2.600 2.600M6.800 .4L4.200 3l2.600 2.600" fill="none" stroke="#fff" stroke-width="1.200"/></svg><div class="t" style="left:14.600px;top:4px;font-size:4.300px;font-weight:bold;color:#eee">后退</div></div>
<div class="jb" style="left:570.2px;top:163.4px;width:32.2px;height:11px"><div class="t" style="left:0;width:32.200px;text-align:center;top:3.800px;font-size:4.300px;font-weight:bold;color:#eee">连续</div></div>
<div class="jb" style="left:570.2px;top:186.8px;width:32.2px;height:11.2px"><div class="t" style="left:8.800px;top:4px;font-size:4.300px;font-weight:bold;color:#eee">前进</div><svg class="a" style="left:22.400px;top:2.900px" width="8" height="6" viewBox="0 0 8 6"><path d="M1.200 .4L3.800 3 1.200 5.600M4.600 .4L7.200 3 4.600 5.600" fill="none" stroke="#fff" stroke-width="1.200"/></svg></div>
<div class="t" style="left:463px;top:205.600px;font-size:4.300px;font-weight:bold;color:#eee">仿真速度</div>
<div class="a" style="left:484.800px;top:205.700px;width:104px;height:4px;background:#1a3cd0;border-top:.8px solid #7d7d7d;border-bottom:.8px solid #7d7d7d;border-radius:1px"></div>
<div class="a" style="left:586.200px;top:204.200px;width:6.800px;height:6.800px;background:#fff;border-radius:50%"></div>
<div class="t" style="left:593.400px;top:205.600px;font-size:4.200px;color:#e4e4e4">100%</div>
<div class="gb" style="left:460.2px;top:217.2px"><svg class="a" style="left:4.200px;top:2px" width="11" height="11" viewBox="0 0 11 11"><path d="M1 4.700h5.200V2.600l3.800 2.900-3.800 2.900V6.300H1z" fill="#f2a200"/></svg><div class="gl">断点定位</div></div>
<div class="gb" style="left:485.1px;top:217.2px"><svg class="a" style="left:4.200px;top:2px" width="11" height="11" viewBox="0 0 11 11"><circle cx="6.400" cy="5.800" r="3" fill="#f4f4f4"/><path d="M6.400 5.800V2.800A3 3 0 0 1 9.400 5.800zM6.400 5.800v3A3 3 0 0 1 3.400 5.800z" fill="#222"/><path d="M1.600 5.800h2" stroke="#eee" stroke-width=".8"/><text x=".4" y="3" font-size="3" fill="#eee" font-family="Liberation Sans,sans-serif">z</text></svg><div class="gl">Z轴回零</div></div>
<div class="gb" style="left:510.1px;top:217.2px"><svg class="a" style="left:4.200px;top:2px" width="11" height="11" viewBox="0 0 11 11"><path d="M3 1.400v7.200M1.400 8.600h8" stroke="#dcdcdc" stroke-width=".9" fill="none"/><text x="5.600" y="5" font-size="4.200" fill="#eee" font-family="Liberation Sans,sans-serif">C</text></svg><div class="gl">标定</div></div>
<div class="gb" style="left:535.1px;top:217.2px"><svg class="a" style="left:4.200px;top:2px" width="11" height="11" viewBox="0 0 11 11"><path d="M4.600 1l2 2-2 2-2-2z" fill="none" stroke="#dcdcdc" stroke-width=".8"/><rect x="8" y="1.600" width="1.400" height="3.400" fill="#dcdcdc"/><path d="M1.200 7.200h8.600v1.800H1.200z" fill="none" stroke="#dcdcdc" stroke-width=".7" stroke-dasharray=".9 .5"/></svg><div class="gl">寻边</div></div>
<div class="gb" style="left:560.1px;top:217.2px"><svg class="a" style="left:4.200px;top:2px" width="11" height="11" viewBox="0 0 11 11"><path d="M3.200 1.200l1.400 5.600M7.800 1.200L6.400 6.800M4.600 6.800h1.800M4.800 6.800l-.6 3M6.200 6.800l.6 3" fill="none" stroke="#bdbdbd" stroke-width=".8"/></svg><div class="gl">吹气</div></div>
<div class="gb" style="left:585.1px;top:217.200px"><div class="t" style="left:4.600px;top:7.300px;font-size:4.200px;font-weight:bold;color:#eee">空气</div><svg class="a" style="left:15.400px;top:8.600px" width="3" height="2.400" viewBox="0 0 3 2.400"><path d="M0 0h3L1.500 2.400z" fill="#eee"/></svg></div>
<div class="gb" style="left:460.2px;top:242.4px"><svg class="a" style="left:4.200px;top:2px" width="11" height="11" viewBox="0 0 11 11"><path d="M2 1.600h7M5.500 1.600v2M2.600 4.800l2.900 1.600 2.900-1.600M2.600 8l2.900-1.600L8.400 8" fill="none" stroke="#dcdcdc" stroke-width=".9"/></svg><div class="gl">边框巡航</div></div>
<div class="gb" style="left:485.1px;top:242.4px"><svg class="a" style="left:4.200px;top:2px" width="11" height="11" viewBox="0 0 11 11"><path d="M1.200 2.600l2.600-1.200v7.800l-2.600 1zM5 1.800h1.600v8H5zM7.600 2.400l2.400-.8v7.600l-2.400 1z" fill="none" stroke="#dcdcdc" stroke-width=".7"/><path d="M5.800.2v1.400" stroke="#dcdcdc" stroke-width=".6"/></svg><div class="gl">一键切断</div></div>
<div class="gb" style="left:510.1px;top:242.4px"><svg class="a" style="left:4.200px;top:2px" width="11" height="11" viewBox="0 0 11 11"><path d="M3.400 2h6v4.600h-6z" fill="none" stroke="#858585" stroke-width=".7"/><path d="M1 9.400l2.600-2.600M1 9.400h3" stroke="#858585" stroke-width=".7" fill="none"/></svg><div class="gl dim">标记坐标</div></div>
<div class="gb" style="left:535.1px;top:242.4px"><svg class="a" style="left:4.200px;top:2px" width="11" height="11" viewBox="0 0 11 11"></svg><div class="gl"></div></div>
<div class="gb" style="left:560.1px;top:242.4px"><svg class="a" style="left:4.200px;top:2px" width="11" height="11" viewBox="0 0 11 11"><path d="M2.600 6.400l3.800-4 2.400 2.200-3.800 4H2.600zM1.400 9.600h5" fill="none" stroke="#dcdcdc" stroke-width=".8"/><path d="M7.600 1.400l2 .2-.4 2" fill="none" stroke="#dcdcdc" stroke-width=".7"/></svg><div class="gl">寻边定位</div></div>
<div class="t" style="left:535.8000000000001px;top:250.600px;width:20.400px;text-align:center;font-size:3.800px;font-weight:bold;color:#e8e8e8">Mark点01▾</div>
<div class="gb" style="left:460.2px;top:267.6px"><svg class="a" style="left:4.200px;top:2px" width="11" height="11" viewBox="0 0 11 11"><circle cx="5.500" cy="5.800" r="3.400" fill="none" stroke="#dcdcdc" stroke-width=".9"/><path d="M5.500 1v4" stroke="#dcdcdc" stroke-width="1"/></svg><div class="gl">激光电源</div></div>
<div class="gb" style="left:485.1px;top:267.6px"><svg class="a" style="left:4.200px;top:2px" width="11" height="11" viewBox="0 0 11 11"><rect x="1.600" y="1.600" width="5.600" height="4.600" fill="none" stroke="#dcdcdc" stroke-width=".8"/><path d="M3 3h2.800v1.800H3zM4.400 6.200v3.400M2.600 9.600h3.600" fill="none" stroke="#dcdcdc" stroke-width=".7"/><rect x="8.400" y="1.600" width="1.300" height="3.600" fill="#dcdcdc"/></svg><div class="gl">光闸</div></div>
<div class="gb" style="left:510.1px;top:267.6px"><svg class="a" style="left:4.200px;top:2px" width="11" height="11" viewBox="0 0 11 11"><path d="M.8 1.200h9.400" stroke="#dcdcdc" stroke-width=".7"/><path d="M5.500 1.600l1.800 1.800-1.800 1.800-1.800-1.800z" fill="none" stroke="#dcdcdc" stroke-width=".8"/><path d="M5.500 5.600v2M3.400 9h4.200" stroke="#dcdcdc" stroke-width="1"/></svg><div class="gl">红光</div></div>
<div class="gb" style="left:535.1px;top:267.6px"><svg class="a" style="left:4.200px;top:2px" width="11" height="11" viewBox="0 0 11 11"><circle cx="4.600" cy="5.400" r="1.400" fill="#858585"/><path d="M4.600 1.800v1.400M4.600 7.600V9M1 5.400h1.400M6.800 5.400h3.400M2 2.800l1 1M7.200 2.800l-1 1M2 8l1-1M7.200 8l-1-1" stroke="#858585" stroke-width=".7"/></svg><div class="gl dim">点射</div></div>
<div class="gb" style="left:560.1px;top:267.6px"><svg class="a" style="left:4.200px;top:2px" width="11" height="11" viewBox="0 0 11 11"><path d="M.8 1.200h9.400" stroke="#dcdcdc" stroke-width=".7"/><path d="M5.500 1.400v3.200M4 3.400l1.500 1.600L7 3.400" fill="none" stroke="#dcdcdc" stroke-width=".9"/><path d="M3.600 7.400h3.800M2.800 9h5.400" stroke="#dcdcdc" stroke-width=".9"/></svg><div class="gl">激光</div></div>
<div class="a" style="left:455.400px;top:126.600px;width:155px;height:170px;border:.6px solid #2b2b2b;border-top:none;border-radius:0 0 2px 2px"></div>
<div class="a" style="left:455px;top:298.800px;width:155.800px;height:17.400px;background:linear-gradient(#363636,#2e2e2e);border-top:.7px solid #484848;border-bottom:.7px solid #3e3e3e"></div>
<div class="a" style="left:505.800px;top:299.500px;width:.7px;height:16px;background:#222;box-shadow:.7px 0 0 #484848"></div>
<div class="a" style="left:557.600px;top:299.500px;width:.7px;height:16px;background:#222;box-shadow:.7px 0 0 #484848"></div>
<svg class="a" style="left:472.600px;top:304.700px" width="6" height="6.400" viewBox="0 0 6 6.400"><path d="M.4 .2l5.400 3-5.400 3z" fill="#10c010"/></svg>
<div class="t" style="left:482px;top:306px;font-size:4.600px;font-weight:bold;color:#f0f0f0">启动</div>
<div class="a" style="left:524.800px;top:305px;width:5.400px;height:5.400px;background:#b00808"></div>
<div class="t" style="left:534.400px;top:306px;font-size:4.600px;color:#8c8c8c">停止</div>
<svg class="a" style="left:569.800px;top:304.200px" width="7" height="7.400" viewBox="0 0 7 7.400"><path d="M.4 .4h1.800v6.600H.4z" fill="#1e9cf0"/><path d="M2.800 .4h1.400l2.600 3.300-2.600 3.300H2.800l2.400-3.300z" fill="#1e9cf0"/></svg>
<div class="t" style="left:579.200px;top:306px;font-size:4.600px;font-weight:bold;color:#f0f0f0">断点继续</div>
<div class="a" style="left:455.400px;top:317.600px;width:155px;height:73.400px;border:.6px solid #2b2b2b;border-radius:2px"></div>
<div class="gb" style="left:460.2px;top:324px"><svg class="a" style="left:4.200px;top:2px" width="11" height="11" viewBox="0 0 11 11"><circle cx="5.500" cy="6.400" r="3" fill="none" stroke="#dcdcdc" stroke-width=".9"/><circle cx="5.500" cy="6.400" r="1" fill="#dcdcdc"/><path d="M5.500 .6v2.600M4.300 1.800h2.400" stroke="#dcdcdc" stroke-width=".8"/></svg><div class="gl">工件原点</div></div>
<div class="gb" style="left:485.1px;top:324px"><svg class="a" style="left:4.200px;top:2px" width="11" height="11" viewBox="0 0 11 11"><path d="M6.600 3v6M3.600 6h6" stroke="#858585" stroke-width=".9"/><text x=".6" y="4" font-size="3.600" fill="#bbb" font-family="Liberation Sans,sans-serif">M</text></svg><div class="gl dim">工件坐标</div></div>
<div class="gb" style="left:510.1px;top:324px"><svg class="a" style="left:4.200px;top:2px" width="11" height="11" viewBox="0 0 11 11"><path d="M3.400 2.400h6v4.200h-6z" fill="none" stroke="#858585" stroke-width=".7"/><path d="M1 9.400l2.400-2.600M1 9.400h3.400M6 8.600h3" stroke="#858585" stroke-width=".7" fill="none"/></svg><div class="gl dim">回标记点02</div></div>
<div class="gb" style="left:535.1px;top:324px"><svg class="a" style="left:4.200px;top:2px" width="11" height="11" viewBox="0 0 11 11"><path d="M2.600 2.600h5.800v5.800H2.600z" fill="none" stroke="#858585" stroke-width=".8"/><path d="M1 2.600h1M9.600 2.600h1M1 8.400h1M9.600 8.400h1M2.600 1v1M8.400 1v1M2.600 9.400v1M8.400 9.400v1" stroke="#858585" stroke-width=".7"/></svg><div class="gl dim">加工跳步</div></div>
<div class="gb" style="left:560.1px;top:324px"><svg class="a" style="left:4.200px;top:2px" width="11" height="11" viewBox="0 0 11 11"><rect x="1.200" y="2.600" width="6.600" height="5.400" rx=".8" fill="#5a5ad4" stroke="#b4b4ff" stroke-width=".6"/><path d="M2.400 4.200h3.600M2.400 6h3.600" stroke="#fff" stroke-width=".7"/><path d="M8.400 3.400l1.800 1.900-1.800 1.900" fill="none" stroke="#ddd" stroke-width=".9"/></svg><div class="gl">仿真</div></div>
<div class="gb" style="left:585.1px;top:324px"><svg class="a" style="left:4.200px;top:2px" width="11" height="11" viewBox="0 0 11 11"><path d="M2.600 2.800l1-1.600h3.800l1 1.600M1 2.800h9v2.400H1zM2 5.200v3.800h7V5.200M4.200 6.600h2.600" fill="none" stroke="#dcdcdc" stroke-width=".9"/></svg><div class="gl">单段加工</div></div>
<div class="gb" style="left:460.2px;top:348.6px"><svg class="a" style="left:4.200px;top:2px" width="11" height="11" viewBox="0 0 11 11"><rect x="1.600" y="3" width="7.800" height="4.600" rx="2.300" fill="none" stroke="#dcdcdc" stroke-width="1"/><path d="M4.400 1.600l1.600 1.400-1.600 1.400" fill="none" stroke="#dcdcdc" stroke-width=".8"/></svg><div class="gl dim">走边框</div></div>
<div class="gb" style="left:485.1px;top:348.6px"><svg class="a" style="left:4.200px;top:2px" width="11" height="11" viewBox="0 0 11 11"><path d="M2.600 1.600v7.200l2-1.600M2.600 1.600h3a2.400 2.400 0 0 1 1.600 4.200L4.600 7.200" fill="none" stroke="#dcdcdc" stroke-width="1"/></svg><div class="gl dim">空运行</div></div>
<div class="gb" style="left:510.1px;top:348.6px"><svg class="a" style="left:4.200px;top:2px" width="11" height="11" viewBox="0 0 11 11"><path d="M2.400 1v9M8.600 1v9M1 2.400h9M1 8.600h9" stroke="#858585" stroke-width=".9"/><path d="M3.600 3.600h3.800v3.800H3.600z" fill="#858585" opacity=".5"/></svg><div class="gl dim">光栅定位</div></div>
<div class="gb" style="left:535.1px;top:348.6px"><svg class="a" style="left:4.200px;top:2px" width="11" height="11" viewBox="0 0 11 11"><circle cx="5.500" cy="5.800" r="3.200" fill="none" stroke="#dcdcdc" stroke-width=".9"/><circle cx="5.500" cy="5.800" r="1.400" fill="none" stroke="#dcdcdc" stroke-width=".8"/><path d="M7.800 1l1.600 1.400" stroke="#dcdcdc" stroke-width=".8"/><path d="M.8 1h9.400" stroke="#dcdcdc" stroke-width=".6"/></svg><div class="gl">风机</div></div>
<div class="gb" style="left:560.1px;top:348.6px"><svg class="a" style="left:4.200px;top:2px" width="11" height="11" viewBox="0 0 11 11"><path d="M.8 1h9.400" stroke="#dcdcdc" stroke-width=".6"/><path d="M3.200 2l1.400 4.400M7.800 2L6.400 6.400M4.600 6.400h1.800M4.800 6.400l-1 3M6.200 6.400l1 3M3 9.600h5" fill="none" stroke="#dcdcdc" stroke-width=".8"/></svg><div class="gl">保护气</div></div>
<div class="gb" style="left:585.1px;top:348.6px"><svg class="a" style="left:4.200px;top:2px" width="11" height="11" viewBox="0 0 11 11"><path d="M1.400 6l1.600-2.600h5L9.600 6v2H1.400z" fill="none" stroke="#dcdcdc" stroke-width=".9"/><path d="M3.200 6v1.200M5.500 6v1.200M7.800 6v1.200M3.600 2.400l.6-1M5.500 2.200V1M7.400 2.400l-.6-1" stroke="#dcdcdc" stroke-width=".7"/></svg><div class="gl">平台交换</div></div>
<div class="t" style="left:459.600px;top:379.400px;font-size:4.400px;font-weight:bold;color:#eee">初始加工间隔</div>
<div class="a" style="left:494.400px;top:377.400px;width:41.600px;height:8.800px;background:#000;border:.6px solid #555"></div>
<div class="t" style="left:495px;width:38.600px;text-align:right;top:380px;font-size:3.900px;font-weight:bold;color:#f0f0f0">1000</div>
<div class="jb" style="left:541.400px;top:377.200px;width:37.400px;height:9px"><div class="t" style="left:0;width:37.400px;text-align:center;top:2.600px;font-size:4.200px;font-weight:bold;color:#eee">确定</div></div>
</body></html>
